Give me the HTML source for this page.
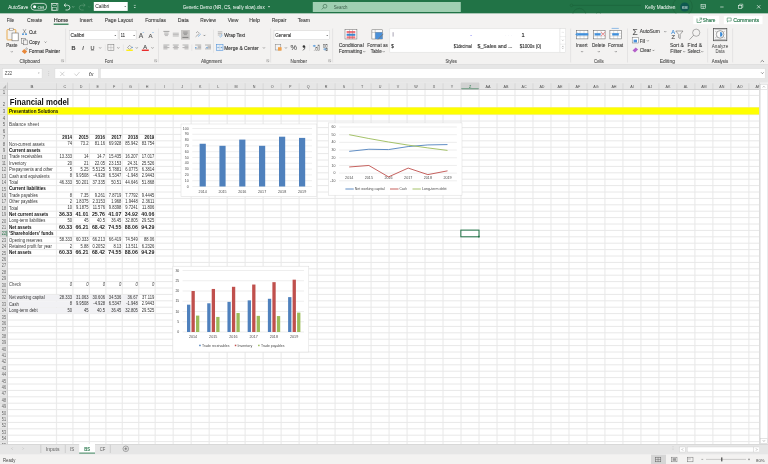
<!DOCTYPE html><html><head><meta charset="utf-8"><title>Generic Demo - Excel</title><style>
html,body{margin:0;padding:0;width:768px;height:464px;overflow:hidden;background:#fff;}
body{position:relative;font-family:"Liberation Sans",sans-serif;}
.sec{position:absolute;left:0;width:768px;overflow:hidden;will-change:transform;}
.sec svg{position:absolute;left:0;top:0;display:block;}
svg text{font-family:"Liberation Sans",sans-serif;}
</style></head><body>
<div class="sec" id="titlebar" style="top:0px;height:14px">
<svg width="768" height="14" viewBox="0 0 768 14">
<rect x="0" y="0" width="768" height="13.60" fill="#217346"/>
<path d="M572.8 5.4 H641" fill="none" stroke="#1b6239" stroke-width="0.6"/>
<circle cx="571.50" cy="5.40" r="1.30" fill="none" stroke="#1b6239" stroke-width="0.55"/>
<circle cx="579.30" cy="15.00" r="6.60" fill="none" stroke="#1b6239" stroke-width="0.6"/>
<circle cx="598.50" cy="14.50" r="2.30" fill="none" stroke="#1b6239" stroke-width="0.5"/>
<circle cx="682.50" cy="6.50" r="9.80" fill="none" stroke="#1b6239" stroke-width="0.6"/>
<text x="8.30" y="8.90" font-size="5.0" fill="#ffffff" textLength="20.00" lengthAdjust="spacingAndGlyphs">AutoSave</text>
<rect x="31.00" y="3.40" width="15.60" height="6.80" fill="none" stroke="#ffffff" stroke-width="0.7" rx="3.4"/>
<circle cx="34.60" cy="6.80" r="1.50" fill="#ffffff"/>
<text x="37.50" y="8.80" font-size="4.4" fill="#ffffff" textLength="6.50" lengthAdjust="spacingAndGlyphs">Off</text>
<rect x="51.30" y="3.40" width="6.60" height="6.80" fill="none" stroke="#e8f0ea" stroke-width="0.6"/>
<rect x="52.80" y="3.40" width="3.60" height="2.20" fill="none" stroke="#e8f0ea" stroke-width="0.5"/>
<rect x="52.60" y="7.60" width="4.00" height="2.60" fill="none" stroke="#e8f0ea" stroke-width="0.5"/>
<path d="M64.2 5.2 h3.3 a2.4 2.4 0 0 1 0 4.8 h-2" fill="none" stroke="#ffffff" stroke-width="0.7"/>
<path d="M65.8 3.6 l-1.8 1.6 l1.8 1.6" fill="none" stroke="#ffffff" stroke-width="0.7"/>
<path d="M72.3 6.4 l0.9 0.9 l0.9 -0.9" fill="none" stroke="#cfe3d6" stroke-width="0.5"/>
<path d="M85 5.2 h-3.3 a2.4 2.4 0 0 0 0 4.8 h2" fill="none" stroke="#5c9a76" stroke-width="0.7"/>
<path d="M83.4 3.6 l1.8 1.6 l-1.8 1.6" fill="none" stroke="#5c9a76" stroke-width="0.7"/>
<path d="M88.3 6.4 l0.9 0.9 l0.9 -0.9" fill="none" stroke="#5c9a76" stroke-width="0.5"/>
<rect x="93.80" y="2.00" width="33.90" height="8.90" fill="#ffffff"/>
<text x="95.20" y="8.40" font-size="4.9" fill="#222" textLength="14.20" lengthAdjust="spacingAndGlyphs">Calibri</text>
<path d="M124.3 6.0 h1.8 l-0.9 0.9z" fill="#444"/>
<line x1="133.80" y1="5.40" x2="135.80" y2="5.40" stroke="#ffffff" stroke-width="0.5"/>
<path d="M133.8 7.0 h2 l-1 1z" fill="#ffffff"/>
<text x="182.70" y="8.80" font-size="4.9" fill="#ffffff" textLength="82.00" lengthAdjust="spacingAndGlyphs">Generic Demo (NR, CS, really slow).xlsx</text>
<path d="M267.9 6.3 h2.2 l-1.1 1.1z" fill="#ffffff"/>
<rect x="312.80" y="2.00" width="148.00" height="10.00" fill="#a0cfb2"/>
<circle cx="325.00" cy="6.20" r="1.90" fill="none" stroke="#2f5f43" stroke-width="0.55"/>
<line x1="323.60" y1="7.60" x2="321.80" y2="9.40" stroke="#2f5f43" stroke-width="0.6"/>
<text x="333.70" y="8.70" font-size="4.9" fill="#3c5e4a" textLength="13.80" lengthAdjust="spacingAndGlyphs">Search</text>
<text x="645.00" y="8.90" font-size="5.0" fill="#ffffff" textLength="30.50" lengthAdjust="spacingAndGlyphs">Kelly Maddren</text>
<circle cx="684.70" cy="7.00" r="4.60" fill="#0e5950"/>
<text x="684.70" y="8.50" font-size="3.6" fill="#ffffff" text-anchor="middle">KM</text>
<rect x="701.00" y="4.60" width="4.50" height="4.00" fill="none" stroke="#ffffff" stroke-width="0.5"/>
<line x1="701.00" y1="6.20" x2="705.50" y2="6.20" stroke="#ffffff" stroke-width="0.5"/>
<line x1="703.20" y1="6.20" x2="703.20" y2="8.60" stroke="#ffffff" stroke-width="0.5"/>
<line x1="720.20" y1="7.00" x2="723.60" y2="7.00" stroke="#ffffff" stroke-width="0.6"/>
<rect x="738.60" y="5.30" width="3.20" height="3.20" fill="none" stroke="#ffffff" stroke-width="0.55"/>
<path d="M739.6 5.2 v-1 h3.2 v3.2 h-1" fill="none" stroke="#ffffff" stroke-width="0.5"/>
<line x1="757.00" y1="5.10" x2="760.40" y2="8.50" stroke="#ffffff" stroke-width="0.6"/>
<line x1="760.40" y1="5.10" x2="757.00" y2="8.50" stroke="#ffffff" stroke-width="0.6"/>
</svg></div>
<div class="sec" id="ribbon" style="top:13px;height:52px">
<svg width="768" height="52" viewBox="0 13 768 52">
<rect x="0" y="13.6" width="768" height="50.60" fill="#f3f2f1"/>
<text x="6.70" y="21.80" font-size="5.9" fill="#444444" textLength="7.50" lengthAdjust="spacingAndGlyphs" stroke="#444444" stroke-width="0.12">File</text>
<text x="27.00" y="21.80" font-size="5.9" fill="#444444" textLength="15.20" lengthAdjust="spacingAndGlyphs" stroke="#444444" stroke-width="0.12">Create</text>
<text x="53.70" y="21.80" font-size="5.9" fill="#262626" textLength="14.60" lengthAdjust="spacingAndGlyphs" stroke="#262626" stroke-width="0.12">Home</text>
<text x="79.50" y="21.80" font-size="5.9" fill="#444444" textLength="13.00" lengthAdjust="spacingAndGlyphs" stroke="#444444" stroke-width="0.12">Insert</text>
<text x="104.70" y="21.80" font-size="5.9" fill="#444444" textLength="28.30" lengthAdjust="spacingAndGlyphs" stroke="#444444" stroke-width="0.12">Page Layout</text>
<text x="145.20" y="21.80" font-size="5.9" fill="#444444" textLength="20.80" lengthAdjust="spacingAndGlyphs" stroke="#444444" stroke-width="0.12">Formulas</text>
<text x="177.70" y="21.80" font-size="5.9" fill="#444444" textLength="11.10" lengthAdjust="spacingAndGlyphs" stroke="#444444" stroke-width="0.12">Data</text>
<text x="200.20" y="21.80" font-size="5.9" fill="#444444" textLength="15.80" lengthAdjust="spacingAndGlyphs" stroke="#444444" stroke-width="0.12">Review</text>
<text x="227.70" y="21.80" font-size="5.9" fill="#444444" textLength="10.80" lengthAdjust="spacingAndGlyphs" stroke="#444444" stroke-width="0.12">View</text>
<text x="249.30" y="21.80" font-size="5.9" fill="#444444" textLength="10.70" lengthAdjust="spacingAndGlyphs" stroke="#444444" stroke-width="0.12">Help</text>
<text x="271.80" y="21.80" font-size="5.9" fill="#444444" textLength="14.50" lengthAdjust="spacingAndGlyphs" stroke="#444444" stroke-width="0.12">Repair</text>
<text x="297.70" y="21.80" font-size="5.9" fill="#444444" textLength="12.30" lengthAdjust="spacingAndGlyphs" stroke="#444444" stroke-width="0.12">Team</text>
<rect x="53.70" y="23.60" width="14.80" height="1.20" fill="#217346"/>
<rect x="693.30" y="15.80" width="25.90" height="8.40" fill="#ffffff"/>
<path d="M697 18.5 v4 h4 v-1.5 M698.8 20.8 l2.8 -2.6 M699.5 18.1 h2.2 v2.1" fill="none" stroke="#217346" stroke-width="0.55"/>
<text x="702.80" y="22.00" font-size="4.9" fill="#217346" textLength="12.60" lengthAdjust="spacingAndGlyphs" stroke="#217346" stroke-width="0.12">Share</text>
<rect x="723.80" y="15.80" width="38.70" height="8.40" fill="#ffffff"/>
<path d="M727.2 18.0 h4 v3 h-2.6 l-1.1 1 v-1 h-0.3z" fill="none" stroke="#217346" stroke-width="0.5"/>
<text x="733.20" y="22.00" font-size="4.9" fill="#217346" textLength="26.00" lengthAdjust="spacingAndGlyphs" stroke="#217346" stroke-width="0.12">Comments</text>
<line x1="65.60" y1="28.50" x2="65.60" y2="62.50" stroke="#d6d6d6" stroke-width="0.55"/>
<line x1="158.50" y1="28.50" x2="158.50" y2="62.50" stroke="#d6d6d6" stroke-width="0.55"/>
<line x1="270.60" y1="28.50" x2="270.60" y2="62.50" stroke="#d6d6d6" stroke-width="0.55"/>
<line x1="332.60" y1="28.50" x2="332.60" y2="62.50" stroke="#d6d6d6" stroke-width="0.55"/>
<line x1="570.60" y1="28.50" x2="570.60" y2="62.50" stroke="#d6d6d6" stroke-width="0.55"/>
<line x1="627.50" y1="28.50" x2="627.50" y2="62.50" stroke="#d6d6d6" stroke-width="0.55"/>
<line x1="707.60" y1="28.50" x2="707.60" y2="62.50" stroke="#d6d6d6" stroke-width="0.55"/>
<line x1="732.60" y1="28.50" x2="732.60" y2="62.50" stroke="#d6d6d6" stroke-width="0.55"/>
<text x="29.60" y="63.00" font-size="5.06" fill="#555" text-anchor="middle" textLength="20.40" lengthAdjust="spacingAndGlyphs" stroke="#555" stroke-width="0.12">Clipboard</text>
<text x="108.75" y="63.00" font-size="5.06" fill="#555" text-anchor="middle" textLength="8.00" lengthAdjust="spacingAndGlyphs" stroke="#555" stroke-width="0.12">Font</text>
<text x="211.40" y="63.00" font-size="5.06" fill="#555" text-anchor="middle" textLength="21.00" lengthAdjust="spacingAndGlyphs" stroke="#555" stroke-width="0.12">Alignment</text>
<text x="298.75" y="63.00" font-size="5.06" fill="#555" text-anchor="middle" textLength="16.50" lengthAdjust="spacingAndGlyphs" stroke="#555" stroke-width="0.12">Number</text>
<text x="451.20" y="63.00" font-size="5.06" fill="#555" text-anchor="middle" textLength="11.30" lengthAdjust="spacingAndGlyphs" stroke="#555" stroke-width="0.12">Styles</text>
<text x="598.80" y="63.00" font-size="5.06" fill="#555" text-anchor="middle" textLength="9.50" lengthAdjust="spacingAndGlyphs" stroke="#555" stroke-width="0.12">Cells</text>
<text x="667.40" y="63.00" font-size="5.06" fill="#555" text-anchor="middle" textLength="15.20" lengthAdjust="spacingAndGlyphs" stroke="#555" stroke-width="0.12">Editing</text>
<text x="720.00" y="63.00" font-size="5.06" fill="#555" text-anchor="middle" textLength="16.30" lengthAdjust="spacingAndGlyphs" stroke="#555" stroke-width="0.12">Analysis</text>
<path d="M61.4 59.6 h2.2 v2.2 h-2.2z" fill="none" stroke="#888" stroke-width="0.35"/>
<line x1="62.10" y1="60.30" x2="63.60" y2="61.80" stroke="#666" stroke-width="0.4"/>
<path d="M154.5 59.6 h2.2 v2.2 h-2.2z" fill="none" stroke="#888" stroke-width="0.35"/>
<line x1="155.20" y1="60.30" x2="156.70" y2="61.80" stroke="#666" stroke-width="0.4"/>
<path d="M266.65 59.6 h2.2 v2.2 h-2.2z" fill="none" stroke="#888" stroke-width="0.35"/>
<line x1="267.35" y1="60.30" x2="268.85" y2="61.80" stroke="#666" stroke-width="0.4"/>
<path d="M328.5 59.6 h2.2 v2.2 h-2.2z" fill="none" stroke="#888" stroke-width="0.35"/>
<line x1="329.20" y1="60.30" x2="330.70" y2="61.80" stroke="#666" stroke-width="0.4"/>
<path d="M760.6 62.0 l1.7 -1.6 l1.7 1.6" fill="none" stroke="#444" stroke-width="0.6"/>
<rect x="7.00" y="29.60" width="8.80" height="10.30" fill="none" stroke="#e8a33d" stroke-width="0.9" rx="0.6"/>
<rect x="9.60" y="28.20" width="3.60" height="2.00" fill="#ffffff" stroke="#777" stroke-width="0.5"/>
<rect x="12.00" y="33.00" width="6.20" height="7.80" fill="#ffffff" stroke="#666" stroke-width="0.6"/>
<text x="11.80" y="47.40" font-size="5.17" fill="#444" text-anchor="middle" textLength="11.30" lengthAdjust="spacingAndGlyphs" stroke="#444" stroke-width="0.12">Paste</text>
<path d="M11.0 51.4 l0.8 0.8 l0.8 -0.8" fill="none" stroke="#3a3a3a" stroke-width="0.55"/>
<path d="M23.1 29.2 l2.6 4.2 M25.9 29.2 l-2.6 4.2" fill="none" stroke="#555" stroke-width="0.5"/>
<circle cx="23.00" cy="34.20" r="0.90" fill="#3a8ad6"/>
<circle cx="26.00" cy="34.20" r="0.90" fill="#3a8ad6"/>
<text x="29.00" y="34.20" font-size="5.17" fill="#333" textLength="7.25" lengthAdjust="spacingAndGlyphs" stroke="#333" stroke-width="0.12">Cut</text>
<rect x="21.50" y="38.60" width="3.80" height="4.80" fill="#f3f2f1" stroke="#555" stroke-width="0.45"/>
<rect x="23.30" y="40.00" width="3.90" height="4.80" fill="#f3f2f1" stroke="#555" stroke-width="0.45"/>
<text x="29.00" y="43.60" font-size="5.17" fill="#333" textLength="10.70" lengthAdjust="spacingAndGlyphs" stroke="#333" stroke-width="0.12">Copy</text>
<path d="M44.6 41.6 l0.95 0.95 l0.95 -0.95" fill="none" stroke="#3a3a3a" stroke-width="0.5"/>
<path d="M21.8 51.5 l3.0 2.4 l2.4 -2.4 l-3 -2.4z" fill="#e8883a"/>
<path d="M25.2 49.2 l1.8 -1.6 M26.2 50.0 l1.8 -1.6" fill="none" stroke="#555" stroke-width="0.5"/>
<text x="29.00" y="53.00" font-size="5.17" fill="#333" textLength="31.00" lengthAdjust="spacingAndGlyphs" stroke="#333" stroke-width="0.12">Format Painter</text>
<rect x="69.30" y="30.60" width="48.70" height="9.00" fill="#ffffff" stroke="#c8c8c8" stroke-width="0.4"/>
<text x="70.60" y="37.30" font-size="5.39" fill="#333" textLength="13.80" lengthAdjust="spacingAndGlyphs" stroke="#333" stroke-width="0.12">Calibri</text>
<path d="M114.4 35.0 h1.8 l-0.9 0.9z" fill="#444"/>
<rect x="119.60" y="30.60" width="16.50" height="9.00" fill="#ffffff" stroke="#c8c8c8" stroke-width="0.4"/>
<text x="120.80" y="37.30" font-size="5.39" fill="#333" textLength="4.00" lengthAdjust="spacingAndGlyphs" stroke="#333" stroke-width="0.12">11</text>
<path d="M133.2 35.0 h1.8 l-0.9 0.9z" fill="#444"/>
<text x="138.80" y="37.80" font-size="6.82" fill="#555" textLength="4.40" lengthAdjust="spacingAndGlyphs" stroke="#555" stroke-width="0.12">A</text>
<path d="M142.6 32.9 l0.7 -0.7 l0.7 0.7" fill="none" stroke="#3a8ad6" stroke-width="0.45"/>
<text x="148.60" y="37.80" font-size="6.16" fill="#555" textLength="4.00" lengthAdjust="spacingAndGlyphs" stroke="#555" stroke-width="0.12">A</text>
<path d="M152.3 32.2 l0.7 0.7 l0.7 -0.7" fill="none" stroke="#3a8ad6" stroke-width="0.45"/>
<text x="73.40" y="49.60" font-size="5.5" fill="#444" text-anchor="middle" font-weight="bold" stroke="#444" stroke-width="0.12">B</text>
<text x="83.00" y="49.60" font-size="5.5" fill="#444" text-anchor="middle" font-style="italic" stroke="#444" stroke-width="0.12">I</text>
<text x="92.50" y="49.60" font-size="5.5" fill="#444" text-anchor="middle" stroke="#444" stroke-width="0.12">U</text>
<line x1="90.80" y1="50.30" x2="94.20" y2="50.30" stroke="#444" stroke-width="0.4"/>
<path d="M99.2 47.4 l0.95 0.95 l0.95 -0.95" fill="none" stroke="#3a3a3a" stroke-width="0.5"/>
<path d="M117.39999999999999 47.4 l0.95 0.95 l0.95 -0.95" fill="none" stroke="#3a3a3a" stroke-width="0.5"/>
<path d="M135.8 47.4 l0.95 0.95 l0.95 -0.95" fill="none" stroke="#3a3a3a" stroke-width="0.5"/>
<path d="M151.55 47.4 l0.95 0.95 l0.95 -0.95" fill="none" stroke="#3a3a3a" stroke-width="0.5"/>
<line x1="105.30" y1="44.50" x2="105.30" y2="51.00" stroke="#d6d6d6" stroke-width="0.4"/>
<line x1="123.40" y1="44.50" x2="123.40" y2="51.00" stroke="#d6d6d6" stroke-width="0.4"/>
<rect x="107.90" y="44.60" width="6.00" height="6.00" fill="none" stroke="#666" stroke-width="0.45"/>
<line x1="110.90" y1="44.60" x2="110.90" y2="50.60" stroke="#999" stroke-width="0.35"/>
<line x1="107.90" y1="47.60" x2="113.90" y2="47.60" stroke="#999" stroke-width="0.35"/>
<path d="M127.5 47.5 l2.2 -2.2 l2.2 2.2 l-2.2 2 z" fill="none" stroke="#555" stroke-width="0.45"/>
<circle cx="132.20" cy="47.30" r="0.60" fill="#3a8ad6"/>
<rect x="126.30" y="49.60" width="6.50" height="1.30" fill="#ffee00"/>
<text x="145.25" y="49.30" font-size="5.72" fill="#444" text-anchor="middle" stroke="#444" stroke-width="0.12">A</text>
<rect x="141.80" y="49.60" width="7.00" height="1.30" fill="#e81818"/>
<line x1="163.40" y1="31.40" x2="169.40" y2="31.40" stroke="#555" stroke-width="0.5"/>
<line x1="164.20" y1="33.00" x2="168.60" y2="33.00" stroke="#777" stroke-width="0.45"/>
<line x1="164.20" y1="34.30" x2="168.60" y2="34.30" stroke="#777" stroke-width="0.45"/>
<line x1="164.90" y1="35.60" x2="167.90" y2="35.60" stroke="#777" stroke-width="0.45"/>
<line x1="172.80" y1="33.20" x2="178.80" y2="33.20" stroke="#777" stroke-width="0.45"/>
<line x1="172.80" y1="34.60" x2="178.80" y2="34.60" stroke="#777" stroke-width="0.45"/>
<line x1="172.80" y1="36.00" x2="178.80" y2="36.00" stroke="#777" stroke-width="0.45"/>
<rect x="181.00" y="30.00" width="8.80" height="9.60" fill="#c8c6c4"/>
<line x1="183.20" y1="32.00" x2="187.60" y2="32.00" stroke="#666" stroke-width="0.45"/>
<line x1="183.20" y1="33.30" x2="187.60" y2="33.30" stroke="#666" stroke-width="0.45"/>
<line x1="183.90" y1="34.60" x2="186.90" y2="34.60" stroke="#666" stroke-width="0.45"/>
<line x1="182.40" y1="37.40" x2="188.40" y2="37.40" stroke="#444" stroke-width="0.55"/>
<path d="M195.6 36.8 l4 -3.6 M196 33 l1.6 -1.4 l1.2 1.2" fill="none" stroke="#666" stroke-width="0.5"/>
<path d="M198 36.6 l2.8 -2.6" fill="none" stroke="#3a8ad6" stroke-width="0.55"/>
<path d="M203.5 34.9 l0.95 0.95 l0.95 -0.95" fill="none" stroke="#3a3a3a" stroke-width="0.5"/>
<line x1="163.40" y1="45.00" x2="169.40" y2="45.00" stroke="#666" stroke-width="0.45"/>
<line x1="163.40" y1="46.30" x2="167.40" y2="46.30" stroke="#666" stroke-width="0.45"/>
<line x1="163.40" y1="47.60" x2="169.40" y2="47.60" stroke="#666" stroke-width="0.45"/>
<line x1="163.40" y1="48.90" x2="167.40" y2="48.90" stroke="#666" stroke-width="0.45"/>
<line x1="172.80" y1="45.00" x2="178.80" y2="45.00" stroke="#666" stroke-width="0.45"/>
<line x1="173.80" y1="46.30" x2="177.80" y2="46.30" stroke="#666" stroke-width="0.45"/>
<line x1="172.80" y1="47.60" x2="178.80" y2="47.60" stroke="#666" stroke-width="0.45"/>
<line x1="173.80" y1="48.90" x2="177.80" y2="48.90" stroke="#666" stroke-width="0.45"/>
<line x1="182.50" y1="45.00" x2="188.50" y2="45.00" stroke="#666" stroke-width="0.45"/>
<line x1="184.50" y1="46.30" x2="188.50" y2="46.30" stroke="#666" stroke-width="0.45"/>
<line x1="182.50" y1="47.60" x2="188.50" y2="47.60" stroke="#666" stroke-width="0.45"/>
<line x1="184.50" y1="48.90" x2="188.50" y2="48.90" stroke="#666" stroke-width="0.45"/>
<line x1="191.80" y1="44.50" x2="191.80" y2="51.00" stroke="#d6d6d6" stroke-width="0.4"/>
<line x1="195.20" y1="45.00" x2="201.20" y2="45.00" stroke="#666" stroke-width="0.45"/>
<line x1="197.70" y1="46.30" x2="201.20" y2="46.30" stroke="#666" stroke-width="0.45"/>
<line x1="197.70" y1="47.60" x2="201.20" y2="47.60" stroke="#666" stroke-width="0.45"/>
<line x1="195.20" y1="48.90" x2="201.20" y2="48.90" stroke="#666" stroke-width="0.45"/>
<path d="M195.2 47.0 l1.8 0.7 l-1.8 0.7z" fill="#3a8ad6"/>
<line x1="205.00" y1="45.00" x2="211.00" y2="45.00" stroke="#666" stroke-width="0.45"/>
<line x1="207.50" y1="46.30" x2="211.00" y2="46.30" stroke="#666" stroke-width="0.45"/>
<line x1="207.50" y1="47.60" x2="211.00" y2="47.60" stroke="#666" stroke-width="0.45"/>
<line x1="205.00" y1="48.90" x2="211.00" y2="48.90" stroke="#666" stroke-width="0.45"/>
<path d="M207.5 47.0 l-1.8 0.7 l1.8 0.7z" fill="#3a8ad6"/>
<line x1="213.50" y1="29.60" x2="213.50" y2="52.80" stroke="#d6d6d6" stroke-width="0.45"/>
<line x1="217.80" y1="31.80" x2="222.30" y2="31.80" stroke="#777" stroke-width="0.45"/>
<line x1="217.80" y1="33.40" x2="222.30" y2="33.40" stroke="#777" stroke-width="0.45"/>
<line x1="217.80" y1="35.00" x2="220.80" y2="35.00" stroke="#777" stroke-width="0.45"/>
<path d="M219.5 36.6 a1.5 1.5 0 0 0 1.8 -2.6" fill="none" stroke="#3a8ad6" stroke-width="0.5"/>
<text x="224.25" y="37.40" font-size="5.17" fill="#333" textLength="20.90" lengthAdjust="spacingAndGlyphs" stroke="#333" stroke-width="0.12">Wrap Text</text>
<rect x="216.60" y="44.40" width="6.40" height="6.20" fill="#e4eef8" stroke="#4a90d9" stroke-width="0.55"/>
<line x1="219.80" y1="44.40" x2="219.80" y2="50.60" stroke="#9ab" stroke-width="0.3"/>
<line x1="216.60" y1="47.50" x2="223.00" y2="47.50" stroke="#9ab" stroke-width="0.3"/>
<path d="M217.4 47.5 l1 -0.8 v1.6z M222.2 47.5 l-1 -0.8 v1.6z" fill="#3a8ad6"/>
<text x="224.25" y="49.60" font-size="5.17" fill="#333" textLength="34.50" lengthAdjust="spacingAndGlyphs" stroke="#333" stroke-width="0.12">Merge &amp; Center</text>
<path d="M263.0 47.4 l0.95 0.95 l0.95 -0.95" fill="none" stroke="#3a3a3a" stroke-width="0.5"/>
<rect x="274.00" y="30.60" width="55.60" height="9.00" fill="#ffffff" stroke="#c8c8c8" stroke-width="0.4"/>
<text x="275.30" y="37.30" font-size="5.39" fill="#333" textLength="16.00" lengthAdjust="spacingAndGlyphs" stroke="#333" stroke-width="0.12">General</text>
<path d="M326.3 35.0 h1.8 l-0.9 0.9z" fill="#444"/>
<rect x="275.20" y="44.60" width="5.60" height="5.40" fill="none" stroke="#777" stroke-width="0.45"/>
<rect x="278.00" y="47.20" width="3.60" height="3.40" fill="#f0a04a"/>
<path d="M285.0 47.4 l0.95 0.95 l0.95 -0.95" fill="none" stroke="#3a3a3a" stroke-width="0.5"/>
<text x="293.75" y="50.00" font-size="7.26" fill="#555" text-anchor="middle" stroke="#555" stroke-width="0.12">%</text>
<circle cx="303.90" cy="46.60" r="1.25" fill="#333"/>
<path d="M304.9 46.8 q0.2 2.2 -1.9 3.6" fill="none" stroke="#333" stroke-width="0.8"/>
<line x1="309.60" y1="44.50" x2="309.60" y2="51.00" stroke="#d6d6d6" stroke-width="0.4"/>
<path d="M312.6 45.9 l2.0 -1.2 v2.4z" fill="#3a8ad6"/>
<line x1="314.40" y1="45.90" x2="316.00" y2="45.90" stroke="#3a8ad6" stroke-width="0.6"/>
<rect x="315.80" y="47.20" width="1.30" height="3.40" fill="none" stroke="#666" stroke-width="0.45"/>
<rect x="318.00" y="45.00" width="1.30" height="5.60" fill="none" stroke="#666" stroke-width="0.45"/>
<circle cx="314.20" cy="50.20" r="0.35" fill="#555"/>
<path d="M323.2 49.2 h2.2 M324.8 48.2 l1.8 1.0 l-1.8 1.0z" fill="none" stroke="#3a8ad6" stroke-width="0.5"/>
<rect x="323.60" y="44.60" width="1.30" height="2.80" fill="none" stroke="#666" stroke-width="0.45"/>
<rect x="325.80" y="44.60" width="1.30" height="2.80" fill="none" stroke="#666" stroke-width="0.45"/>
<rect x="326.00" y="48.20" width="1.30" height="2.60" fill="none" stroke="#666" stroke-width="0.45"/>
<rect x="345.00" y="29.60" width="11.90" height="9.40" fill="#ffffff" stroke="#666" stroke-width="0.5"/>
<rect x="346.60" y="31.00" width="8.70" height="2.30" fill="#f2747c"/>
<rect x="346.60" y="33.80" width="8.70" height="2.00" fill="#3a8ad6"/>
<rect x="346.60" y="36.30" width="8.70" height="2.20" fill="#f2747c"/>
<line x1="349.50" y1="29.60" x2="349.50" y2="39.00" stroke="#777" stroke-width="0.35"/>
<line x1="352.50" y1="29.60" x2="352.50" y2="39.00" stroke="#777" stroke-width="0.35"/>
<text x="351.25" y="47.00" font-size="5.17" fill="#444" text-anchor="middle" textLength="25.00" lengthAdjust="spacingAndGlyphs" stroke="#444" stroke-width="0.12">Conditional</text>
<text x="350.50" y="53.00" font-size="5.17" fill="#444" text-anchor="middle" textLength="23.50" lengthAdjust="spacingAndGlyphs" stroke="#444" stroke-width="0.12">Formatting</text>
<path d="M363.3 51.2 l0.95 0.95 l0.95 -0.95" fill="none" stroke="#3a3a3a" stroke-width="0.5"/>
<rect x="371.90" y="29.80" width="10.50" height="9.20" fill="#ffffff" stroke="#666" stroke-width="0.5"/>
<rect x="375.20" y="32.20" width="7.20" height="6.80" fill="#4a90d9"/>
<line x1="371.90" y1="32.40" x2="382.40" y2="32.40" stroke="#777" stroke-width="0.35"/>
<line x1="375.20" y1="29.80" x2="375.20" y2="39.00" stroke="#777" stroke-width="0.35"/>
<path d="M378 39.5 l5.2 -5.6" fill="none" stroke="#777" stroke-width="0.9"/>
<text x="377.50" y="47.00" font-size="5.17" fill="#444" text-anchor="middle" textLength="20.50" lengthAdjust="spacingAndGlyphs" stroke="#444" stroke-width="0.12">Format as</text>
<text x="376.20" y="53.00" font-size="5.17" fill="#444" text-anchor="middle" textLength="11.00" lengthAdjust="spacingAndGlyphs" stroke="#444" stroke-width="0.12">Table</text>
<path d="M382.7 51.2 l0.95 0.95 l0.95 -0.95" fill="none" stroke="#3a3a3a" stroke-width="0.5"/>
<rect x="389.80" y="28.80" width="170.20" height="23.40" fill="#ffffff" stroke="#dedede" stroke-width="0.5"/>
<rect x="560.00" y="28.80" width="5.60" height="23.40" fill="#ffffff" stroke="#d0d0d0" stroke-width="0.35"/>
<line x1="560.00" y1="36.60" x2="565.60" y2="36.60" stroke="#d0d0d0" stroke-width="0.35"/>
<line x1="560.00" y1="44.20" x2="565.60" y2="44.20" stroke="#d0d0d0" stroke-width="0.35"/>
<path d="M562.1 32.6 l0.7 -0.7 l0.7 0.7" fill="none" stroke="#999" stroke-width="0.35"/>
<path d="M562.1 39.8 l0.7 0.7 l0.7 -0.7" fill="none" stroke="#555" stroke-width="0.4"/>
<line x1="562.00" y1="46.40" x2="563.60" y2="46.40" stroke="#555" stroke-width="0.35"/>
<path d="M562.1 47.8 l0.7 0.7 l0.7 -0.7" fill="none" stroke="#555" stroke-width="0.4"/>
<rect x="392.60" y="32.20" width="1.00" height="4.40" fill="#a9a4b4"/>
<text x="391.20" y="48.20" font-size="5.5" fill="#222" textLength="2.60" lengthAdjust="spacingAndGlyphs" stroke="#222" stroke-width="0.12">$</text>
<line x1="470.40" y1="35.50" x2="471.80" y2="35.50" stroke="#5a5af0" stroke-width="0.5"/>
<circle cx="505.50" cy="35.50" r="0.30" fill="#d9d9ee"/>
<circle cx="508.50" cy="35.50" r="0.30" fill="#d9d9ee"/>
<circle cx="511.50" cy="35.50" r="0.30" fill="#d9d9ee"/>
<text x="523.10" y="37.20" font-size="5.72" fill="#222" text-anchor="middle" stroke="#222" stroke-width="0.12">1</text>
<text x="453.75" y="48.20" font-size="4.73" fill="#333" textLength="18.10" lengthAdjust="spacingAndGlyphs" stroke="#333" stroke-width="0.12">$1decimal</text>
<text x="477.50" y="48.30" font-size="5.39" fill="#333" textLength="35.00" lengthAdjust="spacingAndGlyphs" stroke="#333" stroke-width="0.12">$_Sales and ...</text>
<text x="519.75" y="48.30" font-size="4.95" fill="#333" textLength="21.50" lengthAdjust="spacingAndGlyphs" stroke="#333" stroke-width="0.12">$1000s (0)</text>
<rect x="576.30" y="30.50" width="11.60" height="8.40" fill="#ffffff" stroke="#5a5a5a" stroke-width="0.5"/>
<line x1="576.30" y1="33.30" x2="587.90" y2="33.30" stroke="#9a9a9a" stroke-width="0.3"/>
<line x1="576.30" y1="36.10" x2="587.90" y2="36.10" stroke="#9a9a9a" stroke-width="0.3"/>
<line x1="580.10" y1="30.50" x2="580.10" y2="38.90" stroke="#9a9a9a" stroke-width="0.3"/>
<line x1="584.00" y1="30.50" x2="584.00" y2="38.90" stroke="#9a9a9a" stroke-width="0.3"/>
<rect x="577.50" y="33.20" width="10.80" height="2.30" fill="#3f8fdc"/>
<path d="M575.2 34.35 l2.4 -1.9 v3.8z" fill="#3f8fdc"/>
<rect x="593.50" y="30.50" width="11.60" height="8.40" fill="#ffffff" stroke="#5a5a5a" stroke-width="0.5"/>
<line x1="593.50" y1="33.30" x2="605.10" y2="33.30" stroke="#9a9a9a" stroke-width="0.3"/>
<line x1="593.50" y1="36.10" x2="605.10" y2="36.10" stroke="#9a9a9a" stroke-width="0.3"/>
<line x1="597.30" y1="30.50" x2="597.30" y2="38.90" stroke="#9a9a9a" stroke-width="0.3"/>
<line x1="601.20" y1="30.50" x2="601.20" y2="38.90" stroke="#9a9a9a" stroke-width="0.3"/>
<rect x="594.60" y="33.20" width="6.00" height="2.30" fill="#3f8fdc"/>
<path d="M600.9 31.8 l4.2 4.4 M605.1 31.8 l-4.2 4.4" fill="none" stroke="#e8505a" stroke-width="0.55"/>
<rect x="609.90" y="30.50" width="11.60" height="8.40" fill="#ffffff" stroke="#5a5a5a" stroke-width="0.5"/>
<line x1="609.90" y1="33.30" x2="621.50" y2="33.30" stroke="#9a9a9a" stroke-width="0.3"/>
<line x1="609.90" y1="36.10" x2="621.50" y2="36.10" stroke="#9a9a9a" stroke-width="0.3"/>
<line x1="613.70" y1="30.50" x2="613.70" y2="38.90" stroke="#9a9a9a" stroke-width="0.3"/>
<line x1="617.60" y1="30.50" x2="617.60" y2="38.90" stroke="#9a9a9a" stroke-width="0.3"/>
<rect x="612.20" y="33.20" width="6.60" height="2.30" fill="#3f8fdc"/>
<line x1="611.60" y1="28.40" x2="618.80" y2="28.40" stroke="#3f8fdc" stroke-width="0.55"/>
<text x="581.75" y="47.00" font-size="5.17" fill="#444" text-anchor="middle" textLength="11.50" lengthAdjust="spacingAndGlyphs" stroke="#444" stroke-width="0.12">Insert</text>
<path d="M581.1 51.2 l0.95 0.95 l0.95 -0.95" fill="none" stroke="#3a3a3a" stroke-width="0.5"/>
<text x="598.60" y="47.00" font-size="5.17" fill="#444" text-anchor="middle" textLength="13.40" lengthAdjust="spacingAndGlyphs" stroke="#444" stroke-width="0.12">Delete</text>
<path d="M597.9 51.2 l0.95 0.95 l0.95 -0.95" fill="none" stroke="#3a3a3a" stroke-width="0.5"/>
<text x="615.60" y="47.00" font-size="5.17" fill="#444" text-anchor="middle" textLength="15.10" lengthAdjust="spacingAndGlyphs" stroke="#444" stroke-width="0.12">Format</text>
<path d="M614.9 51.2 l0.95 0.95 l0.95 -0.95" fill="none" stroke="#3a3a3a" stroke-width="0.5"/>
<text x="635.00" y="35.00" font-size="8.36" fill="#555" text-anchor="middle" stroke="#555" stroke-width="0.12">Σ</text>
<text x="639.75" y="33.20" font-size="5.17" fill="#444" textLength="20.00" lengthAdjust="spacingAndGlyphs" stroke="#444" stroke-width="0.12">AutoSum</text>
<path d="M664.3 31.2 l0.95 0.95 l0.95 -0.95" fill="none" stroke="#3a3a3a" stroke-width="0.5"/>
<rect x="632.20" y="37.40" width="6.20" height="5.60" fill="#ffffff" stroke="#666" stroke-width="0.45"/>
<rect x="633.60" y="39.60" width="3.40" height="2.80" fill="#4a90d9"/>
<text x="639.75" y="42.70" font-size="5.17" fill="#444" textLength="5.60" lengthAdjust="spacingAndGlyphs" stroke="#444" stroke-width="0.12">Fill</text>
<path d="M646.9 40.3 l0.95 0.95 l0.95 -0.95" fill="none" stroke="#3a3a3a" stroke-width="0.5"/>
<path d="M632.5 50.4 l3.2 -3.0 l2.4 2.2 l-3.2 3.0z" fill="#b35fc9"/>
<text x="639.75" y="52.30" font-size="5.17" fill="#444" textLength="11.20" lengthAdjust="spacingAndGlyphs" stroke="#444" stroke-width="0.12">Clear</text>
<path d="M652.5 49.9 l0.95 0.95 l0.95 -0.95" fill="none" stroke="#3a3a3a" stroke-width="0.5"/>
<text x="673.20" y="33.60" font-size="5.72" fill="#3a8ad6" text-anchor="middle" stroke="#3a8ad6" stroke-width="0.12">A</text>
<text x="673.20" y="39.30" font-size="5.72" fill="#555" text-anchor="middle" stroke="#555" stroke-width="0.12">Z</text>
<path d="M675.8 31.0 h7.2 l-2.8 3.4 v4.2 l-1.6 -1.0 v-3.2z" fill="none" stroke="#555" stroke-width="0.5"/>
<text x="676.90" y="47.00" font-size="5.17" fill="#444" text-anchor="middle" textLength="13.70" lengthAdjust="spacingAndGlyphs" stroke="#444" stroke-width="0.12">Sort &amp;</text>
<text x="676.00" y="53.00" font-size="5.17" fill="#444" text-anchor="middle" textLength="11.50" lengthAdjust="spacingAndGlyphs" stroke="#444" stroke-width="0.12">Filter</text>
<path d="M683.2 51.2 l0.95 0.95 l0.95 -0.95" fill="none" stroke="#3a3a3a" stroke-width="0.5"/>
<circle cx="696.20" cy="32.70" r="3.60" fill="none" stroke="#666" stroke-width="0.5"/>
<line x1="693.60" y1="35.30" x2="689.60" y2="39.60" stroke="#666" stroke-width="0.55"/>
<text x="694.80" y="47.00" font-size="5.17" fill="#444" text-anchor="middle" textLength="14.40" lengthAdjust="spacingAndGlyphs" stroke="#444" stroke-width="0.12">Find &amp;</text>
<text x="693.80" y="53.00" font-size="5.17" fill="#444" text-anchor="middle" textLength="12.80" lengthAdjust="spacingAndGlyphs" stroke="#444" stroke-width="0.12">Select</text>
<path d="M701.3 51.2 l0.95 0.95 l0.95 -0.95" fill="none" stroke="#3a3a3a" stroke-width="0.5"/>
<rect x="713.50" y="28.40" width="13.30" height="12.30" fill="#f8f8f8" stroke="#505050" stroke-width="0.75"/>
<circle cx="720.10" cy="34.40" r="3.80" fill="none" stroke="#666" stroke-width="0.6"/>
<path d="M720.1 32.0 a2.4 2.4 0 0 1 0 4.8z" fill="#3a8ad6"/>
<path d="M715 31 l2 1.5 M725 31 l-2 1.5 M715 38 l2 -1.5 M725 38 l-2 -1.5" fill="none" stroke="#888" stroke-width="0.4"/>
<line x1="714.50" y1="39.40" x2="725.80" y2="39.40" stroke="#777" stroke-width="0.5"/>
<line x1="714.50" y1="29.20" x2="725.80" y2="29.20" stroke="#777" stroke-width="0.5"/>
<text x="720.00" y="47.50" font-size="4.7" fill="#444" text-anchor="middle" textLength="16.50" lengthAdjust="spacingAndGlyphs">Analyze</text>
<text x="720.00" y="53.40" font-size="4.7" fill="#444" text-anchor="middle" textLength="9.00" lengthAdjust="spacingAndGlyphs">Data</text>
</svg></div>
<div class="sec" id="formula" style="top:64px;height:19px">
<svg width="768" height="19" viewBox="0 64 768 19">
<rect x="0" y="64.2" width="768" height="18.30" fill="#e6e6e6"/>
<line x1="0.00" y1="64.50" x2="768.00" y2="64.50" stroke="#d8d8d8" stroke-width="0.6"/>
<rect x="2.50" y="68.70" width="39.50" height="9.60" fill="#ffffff" stroke="#d4d4d4" stroke-width="0.3"/>
<text x="4.70" y="75.40" font-size="5.2" fill="#555" textLength="7.60" lengthAdjust="spacingAndGlyphs">Z22</text>
<path d="M38.0 72.8 h1.6 l-0.8 0.8z" fill="#555"/>
<circle cx="48.80" cy="71.50" r="0.35" fill="#9a9a9a"/>
<circle cx="48.80" cy="73.30" r="0.35" fill="#9a9a9a"/>
<circle cx="48.80" cy="75.10" r="0.35" fill="#9a9a9a"/>
<rect x="55.00" y="68.70" width="43.30" height="9.60" fill="#ffffff" stroke="#d4d4d4" stroke-width="0.3"/>
<path d="M60.2 71.8 l4.2 4.2 M64.4 71.8 l-4.2 4.2" fill="none" stroke="#a8a8a8" stroke-width="0.5"/>
<path d="M74.4 73.6 l2.0 2.2 l3.2 -3.8" fill="none" stroke="#a8a8a8" stroke-width="0.5"/>
<text x="91.20" y="75.80" font-size="6.0" fill="#444" text-anchor="middle" font-style="italic" font-family="'Liberation Serif', serif" textLength="4.80" lengthAdjust="spacingAndGlyphs">fx</text>
<rect x="100.50" y="68.70" width="664.60" height="9.60" fill="#ffffff" stroke="#d4d4d4" stroke-width="0.3"/>
<path d="M761.2 72.4 l1.2 1.2 l1.2 -1.2" fill="none" stroke="#444" stroke-width="0.6"/>
</svg></div>
<div class="sec" id="sheet" style="top:82px;height:362px">
<svg width="768" height="362" viewBox="0 82 768 362">
<rect x="0" y="82.5" width="768" height="361.50" fill="#e6e6e6"/>
<rect x="7.50" y="89.50" width="752.00" height="354.50" fill="#ffffff"/>
<rect x="0.00" y="82.50" width="759.50" height="7.00" fill="#e6e6e6"/>
<rect x="0.00" y="89.50" width="7.50" height="354.50" fill="#e6e6e6"/>
<rect x="461.03" y="82.50" width="17.99" height="7.00" fill="#d2d2d2"/>
<line x1="461.03" y1="89.00" x2="479.02" y2="89.00" stroke="#217346" stroke-width="0.9"/>
<rect x="0.00" y="230.40" width="7.50" height="6.40" fill="#d2d2d2"/>
<line x1="7.00" y1="230.40" x2="7.00" y2="236.80" stroke="#217346" stroke-width="0.9"/>
<line x1="56.50" y1="89.50" x2="56.50" y2="444.00" stroke="#ececec" stroke-width="1.2"/>
<line x1="72.95" y1="89.50" x2="72.95" y2="444.00" stroke="#ececec" stroke-width="1.2"/>
<line x1="89.40" y1="89.50" x2="89.40" y2="444.00" stroke="#ececec" stroke-width="1.2"/>
<line x1="105.85" y1="89.50" x2="105.85" y2="444.00" stroke="#ececec" stroke-width="1.2"/>
<line x1="122.30" y1="89.50" x2="122.30" y2="444.00" stroke="#ececec" stroke-width="1.2"/>
<line x1="138.75" y1="89.50" x2="138.75" y2="444.00" stroke="#ececec" stroke-width="1.2"/>
<line x1="155.20" y1="89.50" x2="155.20" y2="444.00" stroke="#ececec" stroke-width="1.2"/>
<line x1="173.19" y1="89.50" x2="173.19" y2="444.00" stroke="#ececec" stroke-width="1.2"/>
<line x1="191.18" y1="89.50" x2="191.18" y2="444.00" stroke="#ececec" stroke-width="1.2"/>
<line x1="209.17" y1="89.50" x2="209.17" y2="444.00" stroke="#ececec" stroke-width="1.2"/>
<line x1="227.16" y1="89.50" x2="227.16" y2="444.00" stroke="#ececec" stroke-width="1.2"/>
<line x1="245.15" y1="89.50" x2="245.15" y2="444.00" stroke="#ececec" stroke-width="1.2"/>
<line x1="263.14" y1="89.50" x2="263.14" y2="444.00" stroke="#ececec" stroke-width="1.2"/>
<line x1="281.13" y1="89.50" x2="281.13" y2="444.00" stroke="#ececec" stroke-width="1.2"/>
<line x1="299.12" y1="89.50" x2="299.12" y2="444.00" stroke="#ececec" stroke-width="1.2"/>
<line x1="317.11" y1="89.50" x2="317.11" y2="444.00" stroke="#ececec" stroke-width="1.2"/>
<line x1="335.10" y1="89.50" x2="335.10" y2="444.00" stroke="#ececec" stroke-width="1.2"/>
<line x1="353.09" y1="89.50" x2="353.09" y2="444.00" stroke="#ececec" stroke-width="1.2"/>
<line x1="371.08" y1="89.50" x2="371.08" y2="444.00" stroke="#ececec" stroke-width="1.2"/>
<line x1="389.07" y1="89.50" x2="389.07" y2="444.00" stroke="#ececec" stroke-width="1.2"/>
<line x1="407.06" y1="89.50" x2="407.06" y2="444.00" stroke="#ececec" stroke-width="1.2"/>
<line x1="425.05" y1="89.50" x2="425.05" y2="444.00" stroke="#ececec" stroke-width="1.2"/>
<line x1="443.04" y1="89.50" x2="443.04" y2="444.00" stroke="#ececec" stroke-width="1.2"/>
<line x1="461.03" y1="89.50" x2="461.03" y2="444.00" stroke="#ececec" stroke-width="1.2"/>
<line x1="479.02" y1="89.50" x2="479.02" y2="444.00" stroke="#ececec" stroke-width="1.2"/>
<line x1="497.01" y1="89.50" x2="497.01" y2="444.00" stroke="#ececec" stroke-width="1.2"/>
<line x1="515.00" y1="89.50" x2="515.00" y2="444.00" stroke="#ececec" stroke-width="1.2"/>
<line x1="532.99" y1="89.50" x2="532.99" y2="444.00" stroke="#ececec" stroke-width="1.2"/>
<line x1="550.98" y1="89.50" x2="550.98" y2="444.00" stroke="#ececec" stroke-width="1.2"/>
<line x1="568.97" y1="89.50" x2="568.97" y2="444.00" stroke="#ececec" stroke-width="1.2"/>
<line x1="586.96" y1="89.50" x2="586.96" y2="444.00" stroke="#ececec" stroke-width="1.2"/>
<line x1="604.95" y1="89.50" x2="604.95" y2="444.00" stroke="#ececec" stroke-width="1.2"/>
<line x1="622.94" y1="89.50" x2="622.94" y2="444.00" stroke="#ececec" stroke-width="1.2"/>
<line x1="640.93" y1="89.50" x2="640.93" y2="444.00" stroke="#ececec" stroke-width="1.2"/>
<line x1="658.92" y1="89.50" x2="658.92" y2="444.00" stroke="#ececec" stroke-width="1.2"/>
<line x1="676.91" y1="89.50" x2="676.91" y2="444.00" stroke="#ececec" stroke-width="1.2"/>
<line x1="694.90" y1="89.50" x2="694.90" y2="444.00" stroke="#ececec" stroke-width="1.2"/>
<line x1="712.89" y1="89.50" x2="712.89" y2="444.00" stroke="#ececec" stroke-width="1.2"/>
<line x1="730.88" y1="89.50" x2="730.88" y2="444.00" stroke="#ececec" stroke-width="1.2"/>
<line x1="748.87" y1="89.50" x2="748.87" y2="444.00" stroke="#ececec" stroke-width="1.2"/>
<line x1="7.50" y1="95.40" x2="759.50" y2="95.40" stroke="#e8e8e8" stroke-width="1.0"/>
<line x1="7.50" y1="107.60" x2="759.50" y2="107.60" stroke="#e8e8e8" stroke-width="1.0"/>
<line x1="7.50" y1="114.60" x2="759.50" y2="114.60" stroke="#e8e8e8" stroke-width="1.0"/>
<line x1="7.50" y1="121.00" x2="759.50" y2="121.00" stroke="#e8e8e8" stroke-width="1.0"/>
<line x1="7.50" y1="127.60" x2="759.50" y2="127.60" stroke="#e8e8e8" stroke-width="1.0"/>
<line x1="7.50" y1="134.40" x2="759.50" y2="134.40" stroke="#e8e8e8" stroke-width="1.0"/>
<line x1="7.50" y1="140.80" x2="759.50" y2="140.80" stroke="#e8e8e8" stroke-width="1.0"/>
<line x1="7.50" y1="147.20" x2="759.50" y2="147.20" stroke="#e8e8e8" stroke-width="1.0"/>
<line x1="7.50" y1="153.60" x2="759.50" y2="153.60" stroke="#e8e8e8" stroke-width="1.0"/>
<line x1="7.50" y1="160.00" x2="759.50" y2="160.00" stroke="#e8e8e8" stroke-width="1.0"/>
<line x1="7.50" y1="166.40" x2="759.50" y2="166.40" stroke="#e8e8e8" stroke-width="1.0"/>
<line x1="7.50" y1="172.80" x2="759.50" y2="172.80" stroke="#e8e8e8" stroke-width="1.0"/>
<line x1="7.50" y1="179.20" x2="759.50" y2="179.20" stroke="#e8e8e8" stroke-width="1.0"/>
<line x1="7.50" y1="185.60" x2="759.50" y2="185.60" stroke="#e8e8e8" stroke-width="1.0"/>
<line x1="7.50" y1="192.00" x2="759.50" y2="192.00" stroke="#e8e8e8" stroke-width="1.0"/>
<line x1="7.50" y1="198.40" x2="759.50" y2="198.40" stroke="#e8e8e8" stroke-width="1.0"/>
<line x1="7.50" y1="204.80" x2="759.50" y2="204.80" stroke="#e8e8e8" stroke-width="1.0"/>
<line x1="7.50" y1="211.20" x2="759.50" y2="211.20" stroke="#e8e8e8" stroke-width="1.0"/>
<line x1="7.50" y1="217.60" x2="759.50" y2="217.60" stroke="#e8e8e8" stroke-width="1.0"/>
<line x1="7.50" y1="224.00" x2="759.50" y2="224.00" stroke="#e8e8e8" stroke-width="1.0"/>
<line x1="7.50" y1="230.40" x2="759.50" y2="230.40" stroke="#e8e8e8" stroke-width="1.0"/>
<line x1="7.50" y1="236.80" x2="759.50" y2="236.80" stroke="#e8e8e8" stroke-width="1.0"/>
<line x1="7.50" y1="243.20" x2="759.50" y2="243.20" stroke="#e8e8e8" stroke-width="1.0"/>
<line x1="7.50" y1="249.60" x2="759.50" y2="249.60" stroke="#e8e8e8" stroke-width="1.0"/>
<line x1="7.50" y1="256.00" x2="759.50" y2="256.00" stroke="#e8e8e8" stroke-width="1.0"/>
<line x1="7.50" y1="262.40" x2="759.50" y2="262.40" stroke="#e8e8e8" stroke-width="1.0"/>
<line x1="7.50" y1="268.80" x2="759.50" y2="268.80" stroke="#e8e8e8" stroke-width="1.0"/>
<line x1="7.50" y1="275.20" x2="759.50" y2="275.20" stroke="#e8e8e8" stroke-width="1.0"/>
<line x1="7.50" y1="281.60" x2="759.50" y2="281.60" stroke="#e8e8e8" stroke-width="1.0"/>
<line x1="7.50" y1="288.00" x2="759.50" y2="288.00" stroke="#e8e8e8" stroke-width="1.0"/>
<line x1="7.50" y1="294.40" x2="759.50" y2="294.40" stroke="#e8e8e8" stroke-width="1.0"/>
<line x1="7.50" y1="300.80" x2="759.50" y2="300.80" stroke="#e8e8e8" stroke-width="1.0"/>
<line x1="7.50" y1="307.20" x2="759.50" y2="307.20" stroke="#e8e8e8" stroke-width="1.0"/>
<line x1="7.50" y1="313.60" x2="759.50" y2="313.60" stroke="#e8e8e8" stroke-width="1.0"/>
<line x1="7.50" y1="320.00" x2="759.50" y2="320.00" stroke="#e8e8e8" stroke-width="1.0"/>
<line x1="7.50" y1="326.40" x2="759.50" y2="326.40" stroke="#e8e8e8" stroke-width="1.0"/>
<line x1="7.50" y1="332.80" x2="759.50" y2="332.80" stroke="#e8e8e8" stroke-width="1.0"/>
<line x1="7.50" y1="339.20" x2="759.50" y2="339.20" stroke="#e8e8e8" stroke-width="1.0"/>
<line x1="7.50" y1="345.60" x2="759.50" y2="345.60" stroke="#e8e8e8" stroke-width="1.0"/>
<line x1="7.50" y1="352.00" x2="759.50" y2="352.00" stroke="#e8e8e8" stroke-width="1.0"/>
<line x1="7.50" y1="358.40" x2="759.50" y2="358.40" stroke="#e8e8e8" stroke-width="1.0"/>
<line x1="7.50" y1="364.80" x2="759.50" y2="364.80" stroke="#e8e8e8" stroke-width="1.0"/>
<line x1="7.50" y1="371.20" x2="759.50" y2="371.20" stroke="#e8e8e8" stroke-width="1.0"/>
<line x1="7.50" y1="377.60" x2="759.50" y2="377.60" stroke="#e8e8e8" stroke-width="1.0"/>
<line x1="7.50" y1="384.00" x2="759.50" y2="384.00" stroke="#e8e8e8" stroke-width="1.0"/>
<line x1="7.50" y1="390.40" x2="759.50" y2="390.40" stroke="#e8e8e8" stroke-width="1.0"/>
<line x1="7.50" y1="396.80" x2="759.50" y2="396.80" stroke="#e8e8e8" stroke-width="1.0"/>
<line x1="7.50" y1="403.20" x2="759.50" y2="403.20" stroke="#e8e8e8" stroke-width="1.0"/>
<line x1="7.50" y1="409.60" x2="759.50" y2="409.60" stroke="#e8e8e8" stroke-width="1.0"/>
<line x1="7.50" y1="416.00" x2="759.50" y2="416.00" stroke="#e8e8e8" stroke-width="1.0"/>
<line x1="7.50" y1="422.40" x2="759.50" y2="422.40" stroke="#e8e8e8" stroke-width="1.0"/>
<line x1="7.50" y1="428.80" x2="759.50" y2="428.80" stroke="#e8e8e8" stroke-width="1.0"/>
<line x1="7.50" y1="435.20" x2="759.50" y2="435.20" stroke="#e8e8e8" stroke-width="1.0"/>
<line x1="7.50" y1="441.60" x2="759.50" y2="441.60" stroke="#e8e8e8" stroke-width="1.0"/>
<line x1="56.50" y1="83.30" x2="56.50" y2="89.50" stroke="#cfcfcf" stroke-width="0.6"/>
<line x1="72.95" y1="83.30" x2="72.95" y2="89.50" stroke="#cfcfcf" stroke-width="0.6"/>
<line x1="89.40" y1="83.30" x2="89.40" y2="89.50" stroke="#cfcfcf" stroke-width="0.6"/>
<line x1="105.85" y1="83.30" x2="105.85" y2="89.50" stroke="#cfcfcf" stroke-width="0.6"/>
<line x1="122.30" y1="83.30" x2="122.30" y2="89.50" stroke="#cfcfcf" stroke-width="0.6"/>
<line x1="138.75" y1="83.30" x2="138.75" y2="89.50" stroke="#cfcfcf" stroke-width="0.6"/>
<line x1="155.20" y1="83.30" x2="155.20" y2="89.50" stroke="#cfcfcf" stroke-width="0.6"/>
<line x1="173.19" y1="83.30" x2="173.19" y2="89.50" stroke="#cfcfcf" stroke-width="0.6"/>
<line x1="191.18" y1="83.30" x2="191.18" y2="89.50" stroke="#cfcfcf" stroke-width="0.6"/>
<line x1="209.17" y1="83.30" x2="209.17" y2="89.50" stroke="#cfcfcf" stroke-width="0.6"/>
<line x1="227.16" y1="83.30" x2="227.16" y2="89.50" stroke="#cfcfcf" stroke-width="0.6"/>
<line x1="245.15" y1="83.30" x2="245.15" y2="89.50" stroke="#cfcfcf" stroke-width="0.6"/>
<line x1="263.14" y1="83.30" x2="263.14" y2="89.50" stroke="#cfcfcf" stroke-width="0.6"/>
<line x1="281.13" y1="83.30" x2="281.13" y2="89.50" stroke="#cfcfcf" stroke-width="0.6"/>
<line x1="299.12" y1="83.30" x2="299.12" y2="89.50" stroke="#cfcfcf" stroke-width="0.6"/>
<line x1="317.11" y1="83.30" x2="317.11" y2="89.50" stroke="#cfcfcf" stroke-width="0.6"/>
<line x1="335.10" y1="83.30" x2="335.10" y2="89.50" stroke="#cfcfcf" stroke-width="0.6"/>
<line x1="353.09" y1="83.30" x2="353.09" y2="89.50" stroke="#cfcfcf" stroke-width="0.6"/>
<line x1="371.08" y1="83.30" x2="371.08" y2="89.50" stroke="#cfcfcf" stroke-width="0.6"/>
<line x1="389.07" y1="83.30" x2="389.07" y2="89.50" stroke="#cfcfcf" stroke-width="0.6"/>
<line x1="407.06" y1="83.30" x2="407.06" y2="89.50" stroke="#cfcfcf" stroke-width="0.6"/>
<line x1="425.05" y1="83.30" x2="425.05" y2="89.50" stroke="#cfcfcf" stroke-width="0.6"/>
<line x1="443.04" y1="83.30" x2="443.04" y2="89.50" stroke="#cfcfcf" stroke-width="0.6"/>
<line x1="461.03" y1="83.30" x2="461.03" y2="89.50" stroke="#cfcfcf" stroke-width="0.6"/>
<line x1="479.02" y1="83.30" x2="479.02" y2="89.50" stroke="#cfcfcf" stroke-width="0.6"/>
<line x1="497.01" y1="83.30" x2="497.01" y2="89.50" stroke="#cfcfcf" stroke-width="0.6"/>
<line x1="515.00" y1="83.30" x2="515.00" y2="89.50" stroke="#cfcfcf" stroke-width="0.6"/>
<line x1="532.99" y1="83.30" x2="532.99" y2="89.50" stroke="#cfcfcf" stroke-width="0.6"/>
<line x1="550.98" y1="83.30" x2="550.98" y2="89.50" stroke="#cfcfcf" stroke-width="0.6"/>
<line x1="568.97" y1="83.30" x2="568.97" y2="89.50" stroke="#cfcfcf" stroke-width="0.6"/>
<line x1="586.96" y1="83.30" x2="586.96" y2="89.50" stroke="#cfcfcf" stroke-width="0.6"/>
<line x1="604.95" y1="83.30" x2="604.95" y2="89.50" stroke="#cfcfcf" stroke-width="0.6"/>
<line x1="622.94" y1="83.30" x2="622.94" y2="89.50" stroke="#cfcfcf" stroke-width="0.6"/>
<line x1="640.93" y1="83.30" x2="640.93" y2="89.50" stroke="#cfcfcf" stroke-width="0.6"/>
<line x1="658.92" y1="83.30" x2="658.92" y2="89.50" stroke="#cfcfcf" stroke-width="0.6"/>
<line x1="676.91" y1="83.30" x2="676.91" y2="89.50" stroke="#cfcfcf" stroke-width="0.6"/>
<line x1="694.90" y1="83.30" x2="694.90" y2="89.50" stroke="#cfcfcf" stroke-width="0.6"/>
<line x1="712.89" y1="83.30" x2="712.89" y2="89.50" stroke="#cfcfcf" stroke-width="0.6"/>
<line x1="730.88" y1="83.30" x2="730.88" y2="89.50" stroke="#cfcfcf" stroke-width="0.6"/>
<line x1="748.87" y1="83.30" x2="748.87" y2="89.50" stroke="#cfcfcf" stroke-width="0.6"/>
<line x1="0.00" y1="89.50" x2="759.50" y2="89.50" stroke="#c4c4c4" stroke-width="0.7"/>
<line x1="7.50" y1="82.50" x2="7.50" y2="444.00" stroke="#c4c4c4" stroke-width="0.7"/>
<line x1="0.00" y1="95.40" x2="7.50" y2="95.40" stroke="#d4d4d4" stroke-width="0.6"/>
<line x1="0.00" y1="107.60" x2="7.50" y2="107.60" stroke="#d4d4d4" stroke-width="0.6"/>
<line x1="0.00" y1="114.60" x2="7.50" y2="114.60" stroke="#d4d4d4" stroke-width="0.6"/>
<line x1="0.00" y1="121.00" x2="7.50" y2="121.00" stroke="#d4d4d4" stroke-width="0.6"/>
<line x1="0.00" y1="127.60" x2="7.50" y2="127.60" stroke="#d4d4d4" stroke-width="0.6"/>
<line x1="0.00" y1="134.40" x2="7.50" y2="134.40" stroke="#d4d4d4" stroke-width="0.6"/>
<line x1="0.00" y1="140.80" x2="7.50" y2="140.80" stroke="#d4d4d4" stroke-width="0.6"/>
<line x1="0.00" y1="147.20" x2="7.50" y2="147.20" stroke="#d4d4d4" stroke-width="0.6"/>
<line x1="0.00" y1="153.60" x2="7.50" y2="153.60" stroke="#d4d4d4" stroke-width="0.6"/>
<line x1="0.00" y1="160.00" x2="7.50" y2="160.00" stroke="#d4d4d4" stroke-width="0.6"/>
<line x1="0.00" y1="166.40" x2="7.50" y2="166.40" stroke="#d4d4d4" stroke-width="0.6"/>
<line x1="0.00" y1="172.80" x2="7.50" y2="172.80" stroke="#d4d4d4" stroke-width="0.6"/>
<line x1="0.00" y1="179.20" x2="7.50" y2="179.20" stroke="#d4d4d4" stroke-width="0.6"/>
<line x1="0.00" y1="185.60" x2="7.50" y2="185.60" stroke="#d4d4d4" stroke-width="0.6"/>
<line x1="0.00" y1="192.00" x2="7.50" y2="192.00" stroke="#d4d4d4" stroke-width="0.6"/>
<line x1="0.00" y1="198.40" x2="7.50" y2="198.40" stroke="#d4d4d4" stroke-width="0.6"/>
<line x1="0.00" y1="204.80" x2="7.50" y2="204.80" stroke="#d4d4d4" stroke-width="0.6"/>
<line x1="0.00" y1="211.20" x2="7.50" y2="211.20" stroke="#d4d4d4" stroke-width="0.6"/>
<line x1="0.00" y1="217.60" x2="7.50" y2="217.60" stroke="#d4d4d4" stroke-width="0.6"/>
<line x1="0.00" y1="224.00" x2="7.50" y2="224.00" stroke="#d4d4d4" stroke-width="0.6"/>
<line x1="0.00" y1="230.40" x2="7.50" y2="230.40" stroke="#d4d4d4" stroke-width="0.6"/>
<line x1="0.00" y1="236.80" x2="7.50" y2="236.80" stroke="#d4d4d4" stroke-width="0.6"/>
<line x1="0.00" y1="243.20" x2="7.50" y2="243.20" stroke="#d4d4d4" stroke-width="0.6"/>
<line x1="0.00" y1="249.60" x2="7.50" y2="249.60" stroke="#d4d4d4" stroke-width="0.6"/>
<line x1="0.00" y1="256.00" x2="7.50" y2="256.00" stroke="#d4d4d4" stroke-width="0.6"/>
<line x1="0.00" y1="262.40" x2="7.50" y2="262.40" stroke="#d4d4d4" stroke-width="0.6"/>
<line x1="0.00" y1="268.80" x2="7.50" y2="268.80" stroke="#d4d4d4" stroke-width="0.6"/>
<line x1="0.00" y1="275.20" x2="7.50" y2="275.20" stroke="#d4d4d4" stroke-width="0.6"/>
<line x1="0.00" y1="281.60" x2="7.50" y2="281.60" stroke="#d4d4d4" stroke-width="0.6"/>
<line x1="0.00" y1="288.00" x2="7.50" y2="288.00" stroke="#d4d4d4" stroke-width="0.6"/>
<line x1="0.00" y1="294.40" x2="7.50" y2="294.40" stroke="#d4d4d4" stroke-width="0.6"/>
<line x1="0.00" y1="300.80" x2="7.50" y2="300.80" stroke="#d4d4d4" stroke-width="0.6"/>
<line x1="0.00" y1="307.20" x2="7.50" y2="307.20" stroke="#d4d4d4" stroke-width="0.6"/>
<line x1="0.00" y1="313.60" x2="7.50" y2="313.60" stroke="#d4d4d4" stroke-width="0.6"/>
<line x1="0.00" y1="320.00" x2="7.50" y2="320.00" stroke="#d4d4d4" stroke-width="0.6"/>
<line x1="0.00" y1="326.40" x2="7.50" y2="326.40" stroke="#d4d4d4" stroke-width="0.6"/>
<line x1="0.00" y1="332.80" x2="7.50" y2="332.80" stroke="#d4d4d4" stroke-width="0.6"/>
<line x1="0.00" y1="339.20" x2="7.50" y2="339.20" stroke="#d4d4d4" stroke-width="0.6"/>
<line x1="0.00" y1="345.60" x2="7.50" y2="345.60" stroke="#d4d4d4" stroke-width="0.6"/>
<line x1="0.00" y1="352.00" x2="7.50" y2="352.00" stroke="#d4d4d4" stroke-width="0.6"/>
<line x1="0.00" y1="358.40" x2="7.50" y2="358.40" stroke="#d4d4d4" stroke-width="0.6"/>
<line x1="0.00" y1="364.80" x2="7.50" y2="364.80" stroke="#d4d4d4" stroke-width="0.6"/>
<line x1="0.00" y1="371.20" x2="7.50" y2="371.20" stroke="#d4d4d4" stroke-width="0.6"/>
<line x1="0.00" y1="377.60" x2="7.50" y2="377.60" stroke="#d4d4d4" stroke-width="0.6"/>
<line x1="0.00" y1="384.00" x2="7.50" y2="384.00" stroke="#d4d4d4" stroke-width="0.6"/>
<line x1="0.00" y1="390.40" x2="7.50" y2="390.40" stroke="#d4d4d4" stroke-width="0.6"/>
<line x1="0.00" y1="396.80" x2="7.50" y2="396.80" stroke="#d4d4d4" stroke-width="0.6"/>
<line x1="0.00" y1="403.20" x2="7.50" y2="403.20" stroke="#d4d4d4" stroke-width="0.6"/>
<line x1="0.00" y1="409.60" x2="7.50" y2="409.60" stroke="#d4d4d4" stroke-width="0.6"/>
<line x1="0.00" y1="416.00" x2="7.50" y2="416.00" stroke="#d4d4d4" stroke-width="0.6"/>
<line x1="0.00" y1="422.40" x2="7.50" y2="422.40" stroke="#d4d4d4" stroke-width="0.6"/>
<line x1="0.00" y1="428.80" x2="7.50" y2="428.80" stroke="#d4d4d4" stroke-width="0.6"/>
<line x1="0.00" y1="435.20" x2="7.50" y2="435.20" stroke="#d4d4d4" stroke-width="0.6"/>
<line x1="0.00" y1="441.60" x2="7.50" y2="441.60" stroke="#d4d4d4" stroke-width="0.6"/>
<text x="32.00" y="87.50" font-size="4.4" fill="#444" text-anchor="middle">B</text>
<text x="64.72" y="87.50" font-size="4.4" fill="#505050" text-anchor="middle" textLength="2.67" lengthAdjust="spacingAndGlyphs">C</text>
<text x="81.18" y="87.50" font-size="4.4" fill="#505050" text-anchor="middle" textLength="2.67" lengthAdjust="spacingAndGlyphs">D</text>
<text x="97.62" y="87.50" font-size="4.4" fill="#505050" text-anchor="middle" textLength="2.47" lengthAdjust="spacingAndGlyphs">E</text>
<text x="114.08" y="87.50" font-size="4.4" fill="#505050" text-anchor="middle" textLength="2.26" lengthAdjust="spacingAndGlyphs">F</text>
<text x="130.53" y="87.50" font-size="4.4" fill="#505050" text-anchor="middle" textLength="2.88" lengthAdjust="spacingAndGlyphs">G</text>
<text x="146.97" y="87.50" font-size="4.4" fill="#505050" text-anchor="middle" textLength="2.67" lengthAdjust="spacingAndGlyphs">H</text>
<text x="164.19" y="87.50" font-size="4.4" fill="#505050" text-anchor="middle" textLength="1.03" lengthAdjust="spacingAndGlyphs">I</text>
<text x="182.19" y="87.50" font-size="4.4" fill="#505050" text-anchor="middle" textLength="1.85" lengthAdjust="spacingAndGlyphs">J</text>
<text x="200.18" y="87.50" font-size="4.4" fill="#505050" text-anchor="middle" textLength="2.47" lengthAdjust="spacingAndGlyphs">K</text>
<text x="218.17" y="87.50" font-size="4.4" fill="#505050" text-anchor="middle" textLength="2.06" lengthAdjust="spacingAndGlyphs">L</text>
<text x="236.16" y="87.50" font-size="4.4" fill="#505050" text-anchor="middle" textLength="3.08" lengthAdjust="spacingAndGlyphs">M</text>
<text x="254.15" y="87.50" font-size="4.4" fill="#505050" text-anchor="middle" textLength="2.67" lengthAdjust="spacingAndGlyphs">N</text>
<text x="272.14" y="87.50" font-size="4.4" fill="#505050" text-anchor="middle" textLength="2.88" lengthAdjust="spacingAndGlyphs">O</text>
<text x="290.13" y="87.50" font-size="4.4" fill="#505050" text-anchor="middle" textLength="2.47" lengthAdjust="spacingAndGlyphs">P</text>
<text x="308.12" y="87.50" font-size="4.4" fill="#505050" text-anchor="middle" textLength="2.88" lengthAdjust="spacingAndGlyphs">Q</text>
<text x="326.11" y="87.50" font-size="4.4" fill="#505050" text-anchor="middle" textLength="2.67" lengthAdjust="spacingAndGlyphs">R</text>
<text x="344.10" y="87.50" font-size="4.4" fill="#505050" text-anchor="middle" textLength="2.47" lengthAdjust="spacingAndGlyphs">S</text>
<text x="362.09" y="87.50" font-size="4.4" fill="#505050" text-anchor="middle" textLength="2.26" lengthAdjust="spacingAndGlyphs">T</text>
<text x="380.08" y="87.50" font-size="4.4" fill="#505050" text-anchor="middle" textLength="2.67" lengthAdjust="spacingAndGlyphs">U</text>
<text x="398.07" y="87.50" font-size="4.4" fill="#505050" text-anchor="middle" textLength="2.47" lengthAdjust="spacingAndGlyphs">V</text>
<text x="416.06" y="87.50" font-size="4.4" fill="#505050" text-anchor="middle" textLength="3.49" lengthAdjust="spacingAndGlyphs">W</text>
<text x="434.05" y="87.50" font-size="4.4" fill="#505050" text-anchor="middle" textLength="2.47" lengthAdjust="spacingAndGlyphs">X</text>
<text x="452.04" y="87.50" font-size="4.4" fill="#505050" text-anchor="middle" textLength="2.47" lengthAdjust="spacingAndGlyphs">Y</text>
<text x="470.03" y="87.50" font-size="4.4" fill="#217346" text-anchor="middle" textLength="2.26" lengthAdjust="spacingAndGlyphs">Z</text>
<text x="488.02" y="87.50" font-size="4.4" fill="#505050" text-anchor="middle" textLength="4.94" lengthAdjust="spacingAndGlyphs">AA</text>
<text x="506.01" y="87.50" font-size="4.4" fill="#505050" text-anchor="middle" textLength="4.94" lengthAdjust="spacingAndGlyphs">AB</text>
<text x="524.00" y="87.50" font-size="4.4" fill="#505050" text-anchor="middle" textLength="5.14" lengthAdjust="spacingAndGlyphs">AC</text>
<text x="541.99" y="87.50" font-size="4.4" fill="#505050" text-anchor="middle" textLength="5.14" lengthAdjust="spacingAndGlyphs">AD</text>
<text x="559.98" y="87.50" font-size="4.4" fill="#505050" text-anchor="middle" textLength="4.94" lengthAdjust="spacingAndGlyphs">AE</text>
<text x="577.97" y="87.50" font-size="4.4" fill="#505050" text-anchor="middle" textLength="4.73" lengthAdjust="spacingAndGlyphs">AF</text>
<text x="595.96" y="87.50" font-size="4.4" fill="#505050" text-anchor="middle" textLength="5.35" lengthAdjust="spacingAndGlyphs">AG</text>
<text x="613.95" y="87.50" font-size="4.4" fill="#505050" text-anchor="middle" textLength="5.14" lengthAdjust="spacingAndGlyphs">AH</text>
<text x="631.94" y="87.50" font-size="4.4" fill="#505050" text-anchor="middle" textLength="3.50" lengthAdjust="spacingAndGlyphs">AI</text>
<text x="649.93" y="87.50" font-size="4.4" fill="#505050" text-anchor="middle" textLength="4.32" lengthAdjust="spacingAndGlyphs">AJ</text>
<text x="667.92" y="87.50" font-size="4.4" fill="#505050" text-anchor="middle" textLength="4.94" lengthAdjust="spacingAndGlyphs">AK</text>
<text x="685.91" y="87.50" font-size="4.4" fill="#505050" text-anchor="middle" textLength="4.53" lengthAdjust="spacingAndGlyphs">AL</text>
<text x="703.90" y="87.50" font-size="4.4" fill="#505050" text-anchor="middle" textLength="5.55" lengthAdjust="spacingAndGlyphs">AM</text>
<text x="721.89" y="87.50" font-size="4.4" fill="#505050" text-anchor="middle" textLength="5.14" lengthAdjust="spacingAndGlyphs">AN</text>
<text x="739.88" y="87.50" font-size="4.4" fill="#505050" text-anchor="middle" textLength="5.35" lengthAdjust="spacingAndGlyphs">AO</text>
<text x="757.87" y="87.50" font-size="4.4" fill="#505050" text-anchor="middle" textLength="4.94" lengthAdjust="spacingAndGlyphs">AP</text>
<path d="M2.6 88.4 l3.6 -3.6 v3.6z" fill="#b4b4b4"/>
<text x="3.90" y="94.00" font-size="4.5" fill="#606060" text-anchor="middle" textLength="2.45" lengthAdjust="spacingAndGlyphs">1</text>
<text x="3.90" y="106.20" font-size="4.5" fill="#606060" text-anchor="middle" textLength="2.45" lengthAdjust="spacingAndGlyphs">2</text>
<text x="3.90" y="113.20" font-size="4.5" fill="#606060" text-anchor="middle" textLength="2.45" lengthAdjust="spacingAndGlyphs">3</text>
<text x="3.90" y="119.60" font-size="4.5" fill="#606060" text-anchor="middle" textLength="2.45" lengthAdjust="spacingAndGlyphs">4</text>
<text x="3.90" y="126.20" font-size="4.5" fill="#606060" text-anchor="middle" textLength="2.45" lengthAdjust="spacingAndGlyphs">5</text>
<text x="3.90" y="133.00" font-size="4.5" fill="#606060" text-anchor="middle" textLength="2.45" lengthAdjust="spacingAndGlyphs">6</text>
<text x="3.90" y="139.40" font-size="4.5" fill="#606060" text-anchor="middle" textLength="2.45" lengthAdjust="spacingAndGlyphs">7</text>
<text x="3.90" y="145.80" font-size="4.5" fill="#606060" text-anchor="middle" textLength="2.45" lengthAdjust="spacingAndGlyphs">8</text>
<text x="3.90" y="152.20" font-size="4.5" fill="#606060" text-anchor="middle" textLength="2.45" lengthAdjust="spacingAndGlyphs">9</text>
<text x="3.90" y="158.60" font-size="4.5" fill="#606060" text-anchor="middle" textLength="4.16" lengthAdjust="spacingAndGlyphs">10</text>
<text x="3.90" y="165.00" font-size="4.5" fill="#606060" text-anchor="middle" textLength="3.88" lengthAdjust="spacingAndGlyphs">11</text>
<text x="3.90" y="171.40" font-size="4.5" fill="#606060" text-anchor="middle" textLength="4.16" lengthAdjust="spacingAndGlyphs">12</text>
<text x="3.90" y="177.80" font-size="4.5" fill="#606060" text-anchor="middle" textLength="4.16" lengthAdjust="spacingAndGlyphs">13</text>
<text x="3.90" y="184.20" font-size="4.5" fill="#606060" text-anchor="middle" textLength="4.16" lengthAdjust="spacingAndGlyphs">14</text>
<text x="3.90" y="190.60" font-size="4.5" fill="#606060" text-anchor="middle" textLength="4.16" lengthAdjust="spacingAndGlyphs">15</text>
<text x="3.90" y="197.00" font-size="4.5" fill="#606060" text-anchor="middle" textLength="4.16" lengthAdjust="spacingAndGlyphs">16</text>
<text x="3.90" y="203.40" font-size="4.5" fill="#606060" text-anchor="middle" textLength="4.16" lengthAdjust="spacingAndGlyphs">17</text>
<text x="3.90" y="209.80" font-size="4.5" fill="#606060" text-anchor="middle" textLength="4.16" lengthAdjust="spacingAndGlyphs">18</text>
<text x="3.90" y="216.20" font-size="4.5" fill="#606060" text-anchor="middle" textLength="4.16" lengthAdjust="spacingAndGlyphs">19</text>
<text x="3.90" y="222.60" font-size="4.5" fill="#606060" text-anchor="middle" textLength="4.16" lengthAdjust="spacingAndGlyphs">20</text>
<text x="3.90" y="229.00" font-size="4.5" fill="#606060" text-anchor="middle" textLength="4.16" lengthAdjust="spacingAndGlyphs">21</text>
<text x="3.90" y="235.40" font-size="4.5" fill="#217346" text-anchor="middle" textLength="4.16" lengthAdjust="spacingAndGlyphs">22</text>
<text x="3.90" y="241.80" font-size="4.5" fill="#606060" text-anchor="middle" textLength="4.16" lengthAdjust="spacingAndGlyphs">23</text>
<text x="3.90" y="248.20" font-size="4.5" fill="#606060" text-anchor="middle" textLength="4.16" lengthAdjust="spacingAndGlyphs">24</text>
<text x="3.90" y="254.60" font-size="4.5" fill="#606060" text-anchor="middle" textLength="4.16" lengthAdjust="spacingAndGlyphs">25</text>
<text x="3.90" y="261.00" font-size="4.5" fill="#606060" text-anchor="middle" textLength="4.16" lengthAdjust="spacingAndGlyphs">26</text>
<text x="3.90" y="267.40" font-size="4.5" fill="#606060" text-anchor="middle" textLength="4.16" lengthAdjust="spacingAndGlyphs">27</text>
<text x="3.90" y="273.80" font-size="4.5" fill="#606060" text-anchor="middle" textLength="4.16" lengthAdjust="spacingAndGlyphs">28</text>
<text x="3.90" y="280.20" font-size="4.5" fill="#606060" text-anchor="middle" textLength="4.16" lengthAdjust="spacingAndGlyphs">29</text>
<text x="3.90" y="286.60" font-size="4.5" fill="#606060" text-anchor="middle" textLength="4.16" lengthAdjust="spacingAndGlyphs">30</text>
<text x="3.90" y="293.00" font-size="4.5" fill="#606060" text-anchor="middle" textLength="4.16" lengthAdjust="spacingAndGlyphs">31</text>
<text x="3.90" y="299.40" font-size="4.5" fill="#606060" text-anchor="middle" textLength="4.16" lengthAdjust="spacingAndGlyphs">32</text>
<text x="3.90" y="305.80" font-size="4.5" fill="#606060" text-anchor="middle" textLength="4.16" lengthAdjust="spacingAndGlyphs">33</text>
<text x="3.90" y="312.20" font-size="4.5" fill="#606060" text-anchor="middle" textLength="4.16" lengthAdjust="spacingAndGlyphs">34</text>
<text x="3.90" y="318.60" font-size="4.5" fill="#606060" text-anchor="middle" textLength="4.16" lengthAdjust="spacingAndGlyphs">35</text>
<text x="3.90" y="325.00" font-size="4.5" fill="#606060" text-anchor="middle" textLength="4.16" lengthAdjust="spacingAndGlyphs">36</text>
<text x="3.90" y="331.40" font-size="4.5" fill="#606060" text-anchor="middle" textLength="4.16" lengthAdjust="spacingAndGlyphs">37</text>
<text x="3.90" y="337.80" font-size="4.5" fill="#606060" text-anchor="middle" textLength="4.16" lengthAdjust="spacingAndGlyphs">38</text>
<text x="3.90" y="344.20" font-size="4.5" fill="#606060" text-anchor="middle" textLength="4.16" lengthAdjust="spacingAndGlyphs">39</text>
<text x="3.90" y="350.60" font-size="4.5" fill="#606060" text-anchor="middle" textLength="4.16" lengthAdjust="spacingAndGlyphs">40</text>
<text x="3.90" y="357.00" font-size="4.5" fill="#606060" text-anchor="middle" textLength="4.16" lengthAdjust="spacingAndGlyphs">41</text>
<text x="3.90" y="363.40" font-size="4.5" fill="#606060" text-anchor="middle" textLength="4.16" lengthAdjust="spacingAndGlyphs">42</text>
<text x="3.90" y="369.80" font-size="4.5" fill="#606060" text-anchor="middle" textLength="4.16" lengthAdjust="spacingAndGlyphs">43</text>
<text x="3.90" y="376.20" font-size="4.5" fill="#606060" text-anchor="middle" textLength="4.16" lengthAdjust="spacingAndGlyphs">44</text>
<text x="3.90" y="382.60" font-size="4.5" fill="#606060" text-anchor="middle" textLength="4.16" lengthAdjust="spacingAndGlyphs">45</text>
<text x="3.90" y="389.00" font-size="4.5" fill="#606060" text-anchor="middle" textLength="4.16" lengthAdjust="spacingAndGlyphs">46</text>
<text x="3.90" y="395.40" font-size="4.5" fill="#606060" text-anchor="middle" textLength="4.16" lengthAdjust="spacingAndGlyphs">47</text>
<text x="3.90" y="401.80" font-size="4.5" fill="#606060" text-anchor="middle" textLength="4.16" lengthAdjust="spacingAndGlyphs">48</text>
<text x="3.90" y="408.20" font-size="4.5" fill="#606060" text-anchor="middle" textLength="4.16" lengthAdjust="spacingAndGlyphs">49</text>
<text x="3.90" y="414.60" font-size="4.5" fill="#606060" text-anchor="middle" textLength="4.16" lengthAdjust="spacingAndGlyphs">50</text>
<text x="3.90" y="421.00" font-size="4.5" fill="#606060" text-anchor="middle" textLength="4.16" lengthAdjust="spacingAndGlyphs">51</text>
<text x="3.90" y="427.40" font-size="4.5" fill="#606060" text-anchor="middle" textLength="4.16" lengthAdjust="spacingAndGlyphs">52</text>
<text x="3.90" y="433.80" font-size="4.5" fill="#606060" text-anchor="middle" textLength="4.16" lengthAdjust="spacingAndGlyphs">53</text>
<text x="3.90" y="440.20" font-size="4.5" fill="#606060" text-anchor="middle" textLength="4.16" lengthAdjust="spacingAndGlyphs">54</text>
<text x="3.90" y="446.60" font-size="4.5" fill="#606060" text-anchor="middle" textLength="4.16" lengthAdjust="spacingAndGlyphs">55</text>
<rect x="7.50" y="107.40" width="752.00" height="7.10" fill="#ffff00"/>
<rect x="7.50" y="294.90" width="131.25" height="5.80" fill="#f1f1f4"/>
<rect x="7.50" y="301.30" width="131.25" height="5.80" fill="#f1f1f4"/>
<rect x="7.50" y="307.70" width="131.25" height="5.80" fill="#f1f1f4"/>
<text x="9.80" y="104.70" font-size="8.6" fill="#111" font-weight="bold" textLength="59.20" lengthAdjust="spacingAndGlyphs">Financial model</text>
<text x="8.90" y="112.60" font-size="5.0" fill="#111" font-weight="bold" textLength="49.50" lengthAdjust="spacingAndGlyphs">Presentation Solutions</text>
<text x="9.00" y="126.30" font-size="5.0" fill="#444" textLength="30.00" lengthAdjust="spacingAndGlyphs">Balance sheet</text>
<text x="72.05" y="139.00" font-size="4.9" fill="#111" text-anchor="end" font-weight="bold" textLength="9.79" lengthAdjust="spacingAndGlyphs">2014</text>
<text x="88.50" y="139.00" font-size="4.9" fill="#111" text-anchor="end" font-weight="bold" textLength="9.79" lengthAdjust="spacingAndGlyphs">2015</text>
<text x="104.95" y="139.00" font-size="4.9" fill="#111" text-anchor="end" font-weight="bold" textLength="9.79" lengthAdjust="spacingAndGlyphs">2016</text>
<text x="121.40" y="139.00" font-size="4.9" fill="#111" text-anchor="end" font-weight="bold" textLength="9.79" lengthAdjust="spacingAndGlyphs">2017</text>
<text x="137.85" y="139.00" font-size="4.9" fill="#111" text-anchor="end" font-weight="bold" textLength="9.79" lengthAdjust="spacingAndGlyphs">2018</text>
<text x="154.30" y="139.00" font-size="4.9" fill="#111" text-anchor="end" font-weight="bold" textLength="9.79" lengthAdjust="spacingAndGlyphs">2019</text>
<text x="9.10" y="145.50" font-size="4.7" fill="#333" textLength="35.48" lengthAdjust="spacingAndGlyphs">Non-current assets</text>
<text x="72.05" y="145.40" font-size="4.6" fill="#333" text-anchor="end" textLength="4.56" lengthAdjust="spacingAndGlyphs">74</text>
<text x="88.50" y="145.40" font-size="4.6" fill="#333" text-anchor="end" textLength="7.98" lengthAdjust="spacingAndGlyphs">73.2</text>
<text x="104.95" y="145.40" font-size="4.6" fill="#333" text-anchor="end" textLength="10.26" lengthAdjust="spacingAndGlyphs">81.16</text>
<text x="121.40" y="145.40" font-size="4.6" fill="#333" text-anchor="end" textLength="12.54" lengthAdjust="spacingAndGlyphs">69.928</text>
<text x="137.85" y="145.40" font-size="4.6" fill="#333" text-anchor="end" textLength="12.54" lengthAdjust="spacingAndGlyphs">85.942</text>
<text x="154.30" y="145.40" font-size="4.6" fill="#333" text-anchor="end" textLength="12.54" lengthAdjust="spacingAndGlyphs">83.754</text>
<text x="9.10" y="151.90" font-size="4.6" fill="#111" font-weight="bold" textLength="31.51" lengthAdjust="spacingAndGlyphs">Current assets</text>
<text x="9.10" y="158.30" font-size="4.7" fill="#333" textLength="33.23" lengthAdjust="spacingAndGlyphs">Trade receivables</text>
<text x="72.05" y="158.20" font-size="4.6" fill="#333" text-anchor="end" textLength="12.54" lengthAdjust="spacingAndGlyphs">13.333</text>
<text x="88.50" y="158.20" font-size="4.6" fill="#333" text-anchor="end" textLength="4.56" lengthAdjust="spacingAndGlyphs">14</text>
<text x="104.95" y="158.20" font-size="4.6" fill="#333" text-anchor="end" textLength="7.98" lengthAdjust="spacingAndGlyphs">14.7</text>
<text x="121.40" y="158.20" font-size="4.6" fill="#333" text-anchor="end" textLength="12.54" lengthAdjust="spacingAndGlyphs">15.435</text>
<text x="137.85" y="158.20" font-size="4.6" fill="#333" text-anchor="end" textLength="12.54" lengthAdjust="spacingAndGlyphs">16.207</text>
<text x="154.30" y="158.20" font-size="4.6" fill="#333" text-anchor="end" textLength="12.54" lengthAdjust="spacingAndGlyphs">17.017</text>
<text x="9.10" y="164.70" font-size="4.7" fill="#333" textLength="17.28" lengthAdjust="spacingAndGlyphs">Inventory</text>
<text x="72.05" y="164.60" font-size="4.6" fill="#333" text-anchor="end" textLength="4.56" lengthAdjust="spacingAndGlyphs">20</text>
<text x="88.50" y="164.60" font-size="4.6" fill="#333" text-anchor="end" textLength="4.56" lengthAdjust="spacingAndGlyphs">21</text>
<text x="104.95" y="164.60" font-size="4.6" fill="#333" text-anchor="end" textLength="10.26" lengthAdjust="spacingAndGlyphs">22.05</text>
<text x="121.40" y="164.60" font-size="4.6" fill="#333" text-anchor="end" textLength="12.54" lengthAdjust="spacingAndGlyphs">23.153</text>
<text x="137.85" y="164.60" font-size="4.6" fill="#333" text-anchor="end" textLength="10.26" lengthAdjust="spacingAndGlyphs">24.31</text>
<text x="154.30" y="164.60" font-size="4.6" fill="#333" text-anchor="end" textLength="12.54" lengthAdjust="spacingAndGlyphs">25.526</text>
<text x="9.10" y="171.10" font-size="4.7" fill="#333" textLength="43.66" lengthAdjust="spacingAndGlyphs">Prepayments and other</text>
<text x="72.05" y="171.00" font-size="4.6" fill="#333" text-anchor="end" textLength="2.28" lengthAdjust="spacingAndGlyphs">5</text>
<text x="88.50" y="171.00" font-size="4.6" fill="#333" text-anchor="end" textLength="7.98" lengthAdjust="spacingAndGlyphs">5.25</text>
<text x="104.95" y="171.00" font-size="4.6" fill="#333" text-anchor="end" textLength="12.54" lengthAdjust="spacingAndGlyphs">5.5125</text>
<text x="121.40" y="171.00" font-size="4.6" fill="#333" text-anchor="end" textLength="12.54" lengthAdjust="spacingAndGlyphs">5.7881</text>
<text x="137.85" y="171.00" font-size="4.6" fill="#333" text-anchor="end" textLength="12.54" lengthAdjust="spacingAndGlyphs">6.0775</text>
<text x="154.30" y="171.00" font-size="4.6" fill="#333" text-anchor="end" textLength="12.54" lengthAdjust="spacingAndGlyphs">6.3814</text>
<text x="9.10" y="177.50" font-size="4.7" fill="#333" textLength="40.39" lengthAdjust="spacingAndGlyphs">Cash and equivalents</text>
<text x="72.05" y="177.40" font-size="4.6" fill="#333" text-anchor="end" textLength="2.28" lengthAdjust="spacingAndGlyphs">8</text>
<text x="88.50" y="177.40" font-size="4.6" fill="#333" text-anchor="end" textLength="12.54" lengthAdjust="spacingAndGlyphs">9.9508</text>
<text x="104.95" y="177.40" font-size="4.6" fill="#333" text-anchor="end" textLength="11.63" lengthAdjust="spacingAndGlyphs">-4.928</text>
<text x="121.40" y="177.40" font-size="4.6" fill="#333" text-anchor="end" textLength="12.54" lengthAdjust="spacingAndGlyphs">6.5347</text>
<text x="137.85" y="177.40" font-size="4.6" fill="#333" text-anchor="end" textLength="11.63" lengthAdjust="spacingAndGlyphs">-1.948</text>
<text x="154.30" y="177.40" font-size="4.6" fill="#333" text-anchor="end" textLength="12.54" lengthAdjust="spacingAndGlyphs">2.9443</text>
<text x="9.10" y="183.90" font-size="4.7" fill="#333" textLength="8.87" lengthAdjust="spacingAndGlyphs">Total</text>
<text x="72.05" y="183.80" font-size="4.6" fill="#333" text-anchor="end" textLength="12.54" lengthAdjust="spacingAndGlyphs">46.333</text>
<text x="88.50" y="183.80" font-size="4.6" fill="#333" text-anchor="end" textLength="12.54" lengthAdjust="spacingAndGlyphs">50.201</text>
<text x="104.95" y="183.80" font-size="4.6" fill="#333" text-anchor="end" textLength="12.54" lengthAdjust="spacingAndGlyphs">37.335</text>
<text x="121.40" y="183.80" font-size="4.6" fill="#333" text-anchor="end" textLength="10.26" lengthAdjust="spacingAndGlyphs">50.51</text>
<text x="137.85" y="183.80" font-size="4.6" fill="#333" text-anchor="end" textLength="12.54" lengthAdjust="spacingAndGlyphs">44.646</text>
<text x="154.30" y="183.80" font-size="4.6" fill="#333" text-anchor="end" textLength="12.54" lengthAdjust="spacingAndGlyphs">51.868</text>
<text x="9.10" y="190.30" font-size="4.6" fill="#111" font-weight="bold" textLength="36.76" lengthAdjust="spacingAndGlyphs">Current liabilities</text>
<text x="9.10" y="196.70" font-size="4.7" fill="#333" textLength="28.80" lengthAdjust="spacingAndGlyphs">Trade payables</text>
<text x="72.05" y="196.60" font-size="4.6" fill="#333" text-anchor="end" textLength="2.28" lengthAdjust="spacingAndGlyphs">8</text>
<text x="88.50" y="196.60" font-size="4.6" fill="#333" text-anchor="end" textLength="7.98" lengthAdjust="spacingAndGlyphs">7.35</text>
<text x="104.95" y="196.60" font-size="4.6" fill="#333" text-anchor="end" textLength="10.26" lengthAdjust="spacingAndGlyphs">9.261</text>
<text x="121.40" y="196.60" font-size="4.6" fill="#333" text-anchor="end" textLength="12.54" lengthAdjust="spacingAndGlyphs">7.8719</text>
<text x="137.85" y="196.60" font-size="4.6" fill="#333" text-anchor="end" textLength="12.54" lengthAdjust="spacingAndGlyphs">7.7792</text>
<text x="154.30" y="196.60" font-size="4.6" fill="#333" text-anchor="end" textLength="12.54" lengthAdjust="spacingAndGlyphs">9.4445</text>
<text x="9.10" y="203.10" font-size="4.7" fill="#333" textLength="28.48" lengthAdjust="spacingAndGlyphs">Other payables</text>
<text x="72.05" y="203.00" font-size="4.6" fill="#333" text-anchor="end" textLength="2.28" lengthAdjust="spacingAndGlyphs">2</text>
<text x="88.50" y="203.00" font-size="4.6" fill="#333" text-anchor="end" textLength="12.54" lengthAdjust="spacingAndGlyphs">1.8375</text>
<text x="104.95" y="203.00" font-size="4.6" fill="#333" text-anchor="end" textLength="12.54" lengthAdjust="spacingAndGlyphs">2.3153</text>
<text x="121.40" y="203.00" font-size="4.6" fill="#333" text-anchor="end" textLength="10.26" lengthAdjust="spacingAndGlyphs">1.968</text>
<text x="137.85" y="203.00" font-size="4.6" fill="#333" text-anchor="end" textLength="12.54" lengthAdjust="spacingAndGlyphs">1.9448</text>
<text x="154.30" y="203.00" font-size="4.6" fill="#333" text-anchor="end" textLength="12.24" lengthAdjust="spacingAndGlyphs">2.3611</text>
<text x="9.10" y="209.50" font-size="4.7" fill="#333" textLength="8.87" lengthAdjust="spacingAndGlyphs">Total</text>
<text x="72.05" y="209.40" font-size="4.6" fill="#333" text-anchor="end" textLength="4.56" lengthAdjust="spacingAndGlyphs">10</text>
<text x="88.50" y="209.40" font-size="4.6" fill="#333" text-anchor="end" textLength="12.54" lengthAdjust="spacingAndGlyphs">9.1875</text>
<text x="104.95" y="209.40" font-size="4.6" fill="#333" text-anchor="end" textLength="12.24" lengthAdjust="spacingAndGlyphs">11.576</text>
<text x="121.40" y="209.40" font-size="4.6" fill="#333" text-anchor="end" textLength="12.54" lengthAdjust="spacingAndGlyphs">9.8398</text>
<text x="137.85" y="209.40" font-size="4.6" fill="#333" text-anchor="end" textLength="12.54" lengthAdjust="spacingAndGlyphs">9.7241</text>
<text x="154.30" y="209.40" font-size="4.6" fill="#333" text-anchor="end" textLength="12.24" lengthAdjust="spacingAndGlyphs">11.806</text>
<text x="9.10" y="215.90" font-size="4.6" fill="#111" font-weight="bold" textLength="39.27" lengthAdjust="spacingAndGlyphs">Net current assets</text>
<text x="72.05" y="215.90" font-size="4.8" fill="#1a1a1a" text-anchor="end" font-weight="bold" textLength="13.01" lengthAdjust="spacingAndGlyphs">36.33</text>
<text x="88.50" y="215.90" font-size="4.8" fill="#1a1a1a" text-anchor="end" font-weight="bold" textLength="13.01" lengthAdjust="spacingAndGlyphs">41.01</text>
<text x="104.95" y="215.90" font-size="4.8" fill="#1a1a1a" text-anchor="end" font-weight="bold" textLength="13.01" lengthAdjust="spacingAndGlyphs">25.76</text>
<text x="121.40" y="215.90" font-size="4.8" fill="#1a1a1a" text-anchor="end" font-weight="bold" textLength="13.01" lengthAdjust="spacingAndGlyphs">41.07</text>
<text x="137.85" y="215.90" font-size="4.8" fill="#1a1a1a" text-anchor="end" font-weight="bold" textLength="13.01" lengthAdjust="spacingAndGlyphs">34.92</text>
<text x="154.30" y="215.90" font-size="4.8" fill="#1a1a1a" text-anchor="end" font-weight="bold" textLength="13.01" lengthAdjust="spacingAndGlyphs">40.06</text>
<text x="9.10" y="222.30" font-size="4.7" fill="#333" textLength="36.18" lengthAdjust="spacingAndGlyphs">Long-term liabilities</text>
<text x="72.05" y="222.20" font-size="4.6" fill="#333" text-anchor="end" textLength="4.56" lengthAdjust="spacingAndGlyphs">50</text>
<text x="88.50" y="222.20" font-size="4.6" fill="#333" text-anchor="end" textLength="4.56" lengthAdjust="spacingAndGlyphs">45</text>
<text x="104.95" y="222.20" font-size="4.6" fill="#333" text-anchor="end" textLength="7.98" lengthAdjust="spacingAndGlyphs">40.5</text>
<text x="121.40" y="222.20" font-size="4.6" fill="#333" text-anchor="end" textLength="10.26" lengthAdjust="spacingAndGlyphs">36.45</text>
<text x="137.85" y="222.20" font-size="4.6" fill="#333" text-anchor="end" textLength="12.54" lengthAdjust="spacingAndGlyphs">32.805</text>
<text x="154.30" y="222.20" font-size="4.6" fill="#333" text-anchor="end" textLength="12.54" lengthAdjust="spacingAndGlyphs">29.525</text>
<text x="9.10" y="228.70" font-size="4.6" fill="#111" font-weight="bold" textLength="22.51" lengthAdjust="spacingAndGlyphs">Net assets</text>
<text x="72.05" y="228.70" font-size="4.8" fill="#1a1a1a" text-anchor="end" font-weight="bold" textLength="13.01" lengthAdjust="spacingAndGlyphs">60.33</text>
<text x="88.50" y="228.70" font-size="4.8" fill="#1a1a1a" text-anchor="end" font-weight="bold" textLength="13.01" lengthAdjust="spacingAndGlyphs">66.21</text>
<text x="104.95" y="228.70" font-size="4.8" fill="#1a1a1a" text-anchor="end" font-weight="bold" textLength="13.01" lengthAdjust="spacingAndGlyphs">68.42</text>
<text x="121.40" y="228.70" font-size="4.8" fill="#1a1a1a" text-anchor="end" font-weight="bold" textLength="13.01" lengthAdjust="spacingAndGlyphs">74.55</text>
<text x="137.85" y="228.70" font-size="4.8" fill="#1a1a1a" text-anchor="end" font-weight="bold" textLength="13.01" lengthAdjust="spacingAndGlyphs">88.06</text>
<text x="154.30" y="228.70" font-size="4.8" fill="#1a1a1a" text-anchor="end" font-weight="bold" textLength="13.01" lengthAdjust="spacingAndGlyphs">94.29</text>
<text x="9.10" y="235.10" font-size="4.6" fill="#111" font-weight="bold" textLength="44.40" lengthAdjust="spacingAndGlyphs">'Shareholders' funds</text>
<text x="9.10" y="241.50" font-size="4.7" fill="#333" textLength="33.15" lengthAdjust="spacingAndGlyphs">Opening reserves</text>
<text x="72.05" y="241.40" font-size="4.6" fill="#333" text-anchor="end" textLength="12.54" lengthAdjust="spacingAndGlyphs">58.333</text>
<text x="88.50" y="241.40" font-size="4.6" fill="#333" text-anchor="end" textLength="12.54" lengthAdjust="spacingAndGlyphs">60.333</text>
<text x="104.95" y="241.40" font-size="4.6" fill="#333" text-anchor="end" textLength="12.54" lengthAdjust="spacingAndGlyphs">66.213</text>
<text x="121.40" y="241.40" font-size="4.6" fill="#333" text-anchor="end" textLength="12.54" lengthAdjust="spacingAndGlyphs">66.419</text>
<text x="137.85" y="241.40" font-size="4.6" fill="#333" text-anchor="end" textLength="12.54" lengthAdjust="spacingAndGlyphs">74.549</text>
<text x="154.30" y="241.40" font-size="4.6" fill="#333" text-anchor="end" textLength="10.26" lengthAdjust="spacingAndGlyphs">88.06</text>
<text x="9.10" y="247.90" font-size="4.7" fill="#333" textLength="42.72" lengthAdjust="spacingAndGlyphs">Retained profit for year</text>
<text x="72.05" y="247.80" font-size="4.6" fill="#333" text-anchor="end" textLength="2.28" lengthAdjust="spacingAndGlyphs">2</text>
<text x="88.50" y="247.80" font-size="4.6" fill="#333" text-anchor="end" textLength="7.98" lengthAdjust="spacingAndGlyphs">5.88</text>
<text x="104.95" y="247.80" font-size="4.6" fill="#333" text-anchor="end" textLength="12.54" lengthAdjust="spacingAndGlyphs">0.2052</text>
<text x="121.40" y="247.80" font-size="4.6" fill="#333" text-anchor="end" textLength="7.98" lengthAdjust="spacingAndGlyphs">8.13</text>
<text x="137.85" y="247.80" font-size="4.6" fill="#333" text-anchor="end" textLength="12.24" lengthAdjust="spacingAndGlyphs">13.511</text>
<text x="154.30" y="247.80" font-size="4.6" fill="#333" text-anchor="end" textLength="12.54" lengthAdjust="spacingAndGlyphs">6.2326</text>
<text x="9.10" y="254.30" font-size="4.6" fill="#111" font-weight="bold" textLength="22.51" lengthAdjust="spacingAndGlyphs">Net assets</text>
<text x="72.05" y="254.30" font-size="4.8" fill="#1a1a1a" text-anchor="end" font-weight="bold" textLength="13.01" lengthAdjust="spacingAndGlyphs">60.33</text>
<text x="88.50" y="254.30" font-size="4.8" fill="#1a1a1a" text-anchor="end" font-weight="bold" textLength="13.01" lengthAdjust="spacingAndGlyphs">66.21</text>
<text x="104.95" y="254.30" font-size="4.8" fill="#1a1a1a" text-anchor="end" font-weight="bold" textLength="13.01" lengthAdjust="spacingAndGlyphs">68.42</text>
<text x="121.40" y="254.30" font-size="4.8" fill="#1a1a1a" text-anchor="end" font-weight="bold" textLength="13.01" lengthAdjust="spacingAndGlyphs">74.55</text>
<text x="137.85" y="254.30" font-size="4.8" fill="#1a1a1a" text-anchor="end" font-weight="bold" textLength="13.01" lengthAdjust="spacingAndGlyphs">88.06</text>
<text x="154.30" y="254.30" font-size="4.8" fill="#1a1a1a" text-anchor="end" font-weight="bold" textLength="13.01" lengthAdjust="spacingAndGlyphs">94.29</text>
<text x="9.10" y="286.30" font-size="4.5" fill="#444" font-style="italic" textLength="11.90" lengthAdjust="spacingAndGlyphs">Check</text>
<text x="72.05" y="286.20" font-size="4.5" fill="#444" text-anchor="end" font-style="italic" textLength="2.28" lengthAdjust="spacingAndGlyphs">0</text>
<text x="88.50" y="286.20" font-size="4.5" fill="#444" text-anchor="end" font-style="italic" textLength="2.28" lengthAdjust="spacingAndGlyphs">0</text>
<text x="104.95" y="286.20" font-size="4.5" fill="#444" text-anchor="end" font-style="italic" textLength="2.28" lengthAdjust="spacingAndGlyphs">0</text>
<text x="121.40" y="286.20" font-size="4.5" fill="#444" text-anchor="end" font-style="italic" textLength="2.28" lengthAdjust="spacingAndGlyphs">0</text>
<text x="137.85" y="286.20" font-size="4.5" fill="#444" text-anchor="end" font-style="italic" textLength="2.28" lengthAdjust="spacingAndGlyphs">0</text>
<text x="154.30" y="286.20" font-size="4.5" fill="#444" text-anchor="end" font-style="italic" textLength="2.28" lengthAdjust="spacingAndGlyphs">0</text>
<text x="9.10" y="299.10" font-size="4.7" fill="#333" textLength="35.48" lengthAdjust="spacingAndGlyphs">Net working capital</text>
<text x="72.05" y="299.00" font-size="4.6" fill="#333" text-anchor="end" textLength="12.54" lengthAdjust="spacingAndGlyphs">28.333</text>
<text x="88.50" y="299.00" font-size="4.6" fill="#333" text-anchor="end" textLength="12.54" lengthAdjust="spacingAndGlyphs">31.063</text>
<text x="104.95" y="299.00" font-size="4.6" fill="#333" text-anchor="end" textLength="12.54" lengthAdjust="spacingAndGlyphs">30.606</text>
<text x="121.40" y="299.00" font-size="4.6" fill="#333" text-anchor="end" textLength="12.54" lengthAdjust="spacingAndGlyphs">34.536</text>
<text x="137.85" y="299.00" font-size="4.6" fill="#333" text-anchor="end" textLength="10.26" lengthAdjust="spacingAndGlyphs">36.67</text>
<text x="154.30" y="299.00" font-size="4.6" fill="#333" text-anchor="end" textLength="12.24" lengthAdjust="spacingAndGlyphs">37.119</text>
<text x="9.10" y="305.50" font-size="4.7" fill="#333" textLength="9.80" lengthAdjust="spacingAndGlyphs">Cash</text>
<text x="72.05" y="305.40" font-size="4.6" fill="#333" text-anchor="end" textLength="2.28" lengthAdjust="spacingAndGlyphs">8</text>
<text x="88.50" y="305.40" font-size="4.6" fill="#333" text-anchor="end" textLength="12.54" lengthAdjust="spacingAndGlyphs">9.9508</text>
<text x="104.95" y="305.40" font-size="4.6" fill="#333" text-anchor="end" textLength="11.63" lengthAdjust="spacingAndGlyphs">-4.928</text>
<text x="121.40" y="305.40" font-size="4.6" fill="#333" text-anchor="end" textLength="12.54" lengthAdjust="spacingAndGlyphs">6.5347</text>
<text x="137.85" y="305.40" font-size="4.6" fill="#333" text-anchor="end" textLength="11.63" lengthAdjust="spacingAndGlyphs">-1.948</text>
<text x="154.30" y="305.40" font-size="4.6" fill="#333" text-anchor="end" textLength="12.54" lengthAdjust="spacingAndGlyphs">2.9443</text>
<text x="9.10" y="311.90" font-size="4.7" fill="#333" textLength="28.48" lengthAdjust="spacingAndGlyphs">Long-term debt</text>
<text x="72.05" y="311.80" font-size="4.6" fill="#333" text-anchor="end" textLength="4.56" lengthAdjust="spacingAndGlyphs">50</text>
<text x="88.50" y="311.80" font-size="4.6" fill="#333" text-anchor="end" textLength="4.56" lengthAdjust="spacingAndGlyphs">45</text>
<text x="104.95" y="311.80" font-size="4.6" fill="#333" text-anchor="end" textLength="7.98" lengthAdjust="spacingAndGlyphs">40.5</text>
<text x="121.40" y="311.80" font-size="4.6" fill="#333" text-anchor="end" textLength="10.26" lengthAdjust="spacingAndGlyphs">36.45</text>
<text x="137.85" y="311.80" font-size="4.6" fill="#333" text-anchor="end" textLength="12.54" lengthAdjust="spacingAndGlyphs">32.805</text>
<text x="154.30" y="311.80" font-size="4.6" fill="#333" text-anchor="end" textLength="12.54" lengthAdjust="spacingAndGlyphs">29.525</text>
<rect x="460.83" y="230.10" width="18.19" height="6.70" fill="none" stroke="#217346" stroke-width="1.0"/>
<rect x="478.02" y="235.80" width="1.60" height="1.60" fill="#217346"/>
<rect x="181.00" y="124.00" width="135.80" height="72.70" fill="#ffffff" stroke="#d9d9d9" stroke-width="0.5"/>
<line x1="192.30" y1="186.50" x2="312.00" y2="186.50" stroke="#d9d9d9" stroke-width="0.45"/>
<text x="188.60" y="187.60" font-size="3.5" fill="#4a4a4a" text-anchor="end">0</text>
<line x1="192.30" y1="180.70" x2="312.00" y2="180.70" stroke="#d9d9d9" stroke-width="0.45"/>
<text x="188.60" y="181.80" font-size="3.5" fill="#4a4a4a" text-anchor="end">10</text>
<line x1="192.30" y1="174.90" x2="312.00" y2="174.90" stroke="#d9d9d9" stroke-width="0.45"/>
<text x="188.60" y="176.00" font-size="3.5" fill="#4a4a4a" text-anchor="end">20</text>
<line x1="192.30" y1="169.10" x2="312.00" y2="169.10" stroke="#d9d9d9" stroke-width="0.45"/>
<text x="188.60" y="170.20" font-size="3.5" fill="#4a4a4a" text-anchor="end">30</text>
<line x1="192.30" y1="163.30" x2="312.00" y2="163.30" stroke="#d9d9d9" stroke-width="0.45"/>
<text x="188.60" y="164.40" font-size="3.5" fill="#4a4a4a" text-anchor="end">40</text>
<line x1="192.30" y1="157.50" x2="312.00" y2="157.50" stroke="#d9d9d9" stroke-width="0.45"/>
<text x="188.60" y="158.60" font-size="3.5" fill="#4a4a4a" text-anchor="end">50</text>
<line x1="192.30" y1="151.70" x2="312.00" y2="151.70" stroke="#d9d9d9" stroke-width="0.45"/>
<text x="188.60" y="152.80" font-size="3.5" fill="#4a4a4a" text-anchor="end">60</text>
<line x1="192.30" y1="145.90" x2="312.00" y2="145.90" stroke="#d9d9d9" stroke-width="0.45"/>
<text x="188.60" y="147.00" font-size="3.5" fill="#4a4a4a" text-anchor="end">70</text>
<line x1="192.30" y1="140.10" x2="312.00" y2="140.10" stroke="#d9d9d9" stroke-width="0.45"/>
<text x="188.60" y="141.20" font-size="3.5" fill="#4a4a4a" text-anchor="end">80</text>
<line x1="192.30" y1="134.30" x2="312.00" y2="134.30" stroke="#d9d9d9" stroke-width="0.45"/>
<text x="188.60" y="135.40" font-size="3.5" fill="#4a4a4a" text-anchor="end">90</text>
<line x1="192.30" y1="128.50" x2="312.00" y2="128.50" stroke="#d9d9d9" stroke-width="0.45"/>
<text x="188.60" y="129.60" font-size="3.5" fill="#4a4a4a" text-anchor="end">100</text>
<rect x="199.60" y="143.75" width="6.20" height="42.75" fill="#4f81bd"/>
<text x="202.70" y="193.00" font-size="3.5" fill="#4a4a4a" text-anchor="middle" textLength="8.20" lengthAdjust="spacingAndGlyphs">2014</text>
<rect x="219.40" y="145.80" width="6.20" height="40.70" fill="#4f81bd"/>
<text x="222.50" y="193.00" font-size="3.5" fill="#4a4a4a" text-anchor="middle" textLength="8.20" lengthAdjust="spacingAndGlyphs">2015</text>
<rect x="239.20" y="139.60" width="6.20" height="46.90" fill="#4f81bd"/>
<text x="242.30" y="193.00" font-size="3.5" fill="#4a4a4a" text-anchor="middle" textLength="8.20" lengthAdjust="spacingAndGlyphs">2016</text>
<rect x="259.00" y="145.80" width="6.20" height="40.70" fill="#4f81bd"/>
<text x="262.10" y="193.00" font-size="3.5" fill="#4a4a4a" text-anchor="middle" textLength="8.20" lengthAdjust="spacingAndGlyphs">2017</text>
<rect x="279.00" y="136.70" width="6.20" height="49.80" fill="#4f81bd"/>
<text x="282.10" y="193.00" font-size="3.5" fill="#4a4a4a" text-anchor="middle" textLength="8.20" lengthAdjust="spacingAndGlyphs">2018</text>
<rect x="299.00" y="137.90" width="6.20" height="48.60" fill="#4f81bd"/>
<text x="302.10" y="193.00" font-size="3.5" fill="#4a4a4a" text-anchor="middle" textLength="8.20" lengthAdjust="spacingAndGlyphs">2019</text>
<rect x="328.30" y="122.90" width="133.70" height="72.30" fill="#ffffff" stroke="#d9d9d9" stroke-width="0.5"/>
<line x1="339.20" y1="180.80" x2="456.90" y2="180.80" stroke="#d9d9d9" stroke-width="0.45"/>
<text x="335.40" y="181.90" font-size="3.5" fill="#4a4a4a" text-anchor="end">-10</text>
<line x1="339.20" y1="173.11" x2="456.90" y2="173.11" stroke="#d9d9d9" stroke-width="0.45"/>
<text x="335.40" y="174.21" font-size="3.5" fill="#4a4a4a" text-anchor="end">0</text>
<line x1="339.20" y1="165.43" x2="456.90" y2="165.43" stroke="#d9d9d9" stroke-width="0.45"/>
<text x="335.40" y="166.53" font-size="3.5" fill="#4a4a4a" text-anchor="end">10</text>
<line x1="339.20" y1="157.74" x2="456.90" y2="157.74" stroke="#d9d9d9" stroke-width="0.45"/>
<text x="335.40" y="158.84" font-size="3.5" fill="#4a4a4a" text-anchor="end">20</text>
<line x1="339.20" y1="150.06" x2="456.90" y2="150.06" stroke="#d9d9d9" stroke-width="0.45"/>
<text x="335.40" y="151.16" font-size="3.5" fill="#4a4a4a" text-anchor="end">30</text>
<line x1="339.20" y1="142.37" x2="456.90" y2="142.37" stroke="#d9d9d9" stroke-width="0.45"/>
<text x="335.40" y="143.47" font-size="3.5" fill="#4a4a4a" text-anchor="end">40</text>
<line x1="339.20" y1="134.69" x2="456.90" y2="134.69" stroke="#d9d9d9" stroke-width="0.45"/>
<text x="335.40" y="135.79" font-size="3.5" fill="#4a4a4a" text-anchor="end">50</text>
<line x1="339.20" y1="127.00" x2="456.90" y2="127.00" stroke="#d9d9d9" stroke-width="0.45"/>
<text x="335.40" y="128.10" font-size="3.5" fill="#4a4a4a" text-anchor="end">60</text>
<text x="349.20" y="178.60" font-size="3.5" fill="#4a4a4a" text-anchor="middle" textLength="8.20" lengthAdjust="spacingAndGlyphs">2014</text>
<text x="368.86" y="178.60" font-size="3.5" fill="#4a4a4a" text-anchor="middle" textLength="8.20" lengthAdjust="spacingAndGlyphs">2015</text>
<text x="388.52" y="178.60" font-size="3.5" fill="#4a4a4a" text-anchor="middle" textLength="8.20" lengthAdjust="spacingAndGlyphs">2016</text>
<text x="408.18" y="178.60" font-size="3.5" fill="#4a4a4a" text-anchor="middle" textLength="8.20" lengthAdjust="spacingAndGlyphs">2017</text>
<text x="427.84" y="178.60" font-size="3.5" fill="#4a4a4a" text-anchor="middle" textLength="8.20" lengthAdjust="spacingAndGlyphs">2018</text>
<text x="447.50" y="178.60" font-size="3.5" fill="#4a4a4a" text-anchor="middle" textLength="8.20" lengthAdjust="spacingAndGlyphs">2019</text>
<path d="M349.20 151.34 L368.86 149.24 L388.52 149.59 L408.18 146.57 L427.84 144.93 L447.50 144.59" fill="none" stroke="#4f81bd" stroke-width="0.9" stroke-linejoin="round"/>
<path d="M349.20 166.97 L368.86 165.47 L388.52 176.90 L408.18 168.09 L427.84 174.61 L447.50 170.85" fill="none" stroke="#c0504d" stroke-width="0.9" stroke-linejoin="round"/>
<path d="M349.20 134.69 L368.86 138.53 L388.52 141.99 L408.18 145.10 L427.84 147.90 L447.50 150.42" fill="none" stroke="#9bbb59" stroke-width="0.9" stroke-linejoin="round"/>
<line x1="345.40" y1="189.00" x2="353.75" y2="189.00" stroke="#4f81bd" stroke-width="0.9"/>
<text x="354.80" y="190.20" font-size="3.5" fill="#4a4a4a" textLength="29.80" lengthAdjust="spacingAndGlyphs">Net working capital</text>
<line x1="390.00" y1="189.00" x2="398.50" y2="189.00" stroke="#c0504d" stroke-width="0.9"/>
<text x="399.60" y="190.20" font-size="3.5" fill="#4a4a4a" textLength="7.30" lengthAdjust="spacingAndGlyphs">Cash</text>
<line x1="412.50" y1="189.00" x2="420.80" y2="189.00" stroke="#9bbb59" stroke-width="0.9"/>
<text x="422.00" y="190.20" font-size="3.5" fill="#4a4a4a" textLength="24.50" lengthAdjust="spacingAndGlyphs">Long-term debt</text>
<rect x="172.90" y="266.20" width="135.90" height="85.80" fill="#ffffff" stroke="#d9d9d9" stroke-width="0.5"/>
<line x1="182.60" y1="332.00" x2="304.00" y2="332.00" stroke="#d9d9d9" stroke-width="0.45"/>
<text x="179.30" y="333.10" font-size="3.5" fill="#4a4a4a" text-anchor="end">0</text>
<line x1="182.60" y1="321.75" x2="304.00" y2="321.75" stroke="#d9d9d9" stroke-width="0.45"/>
<text x="179.30" y="322.85" font-size="3.5" fill="#4a4a4a" text-anchor="end">5</text>
<line x1="182.60" y1="311.50" x2="304.00" y2="311.50" stroke="#d9d9d9" stroke-width="0.45"/>
<text x="179.30" y="312.60" font-size="3.5" fill="#4a4a4a" text-anchor="end">10</text>
<line x1="182.60" y1="301.25" x2="304.00" y2="301.25" stroke="#d9d9d9" stroke-width="0.45"/>
<text x="179.30" y="302.35" font-size="3.5" fill="#4a4a4a" text-anchor="end">15</text>
<line x1="182.60" y1="291.00" x2="304.00" y2="291.00" stroke="#d9d9d9" stroke-width="0.45"/>
<text x="179.30" y="292.10" font-size="3.5" fill="#4a4a4a" text-anchor="end">20</text>
<line x1="182.60" y1="280.75" x2="304.00" y2="280.75" stroke="#d9d9d9" stroke-width="0.45"/>
<text x="179.30" y="281.85" font-size="3.5" fill="#4a4a4a" text-anchor="end">25</text>
<line x1="182.60" y1="270.50" x2="304.00" y2="270.50" stroke="#d9d9d9" stroke-width="0.45"/>
<text x="179.30" y="271.60" font-size="3.5" fill="#4a4a4a" text-anchor="end">30</text>
<rect x="187.00" y="304.67" width="3.30" height="27.33" fill="#4f81bd"/>
<rect x="191.50" y="291.00" width="3.30" height="41.00" fill="#c0504d"/>
<rect x="196.00" y="315.60" width="3.30" height="16.40" fill="#9bbb59"/>
<text x="193.00" y="338.20" font-size="3.5" fill="#4a4a4a" text-anchor="middle" textLength="8.20" lengthAdjust="spacingAndGlyphs">2014</text>
<rect x="207.22" y="303.30" width="3.30" height="28.70" fill="#4f81bd"/>
<rect x="211.72" y="288.95" width="3.30" height="43.05" fill="#c0504d"/>
<rect x="216.22" y="316.93" width="3.30" height="15.07" fill="#9bbb59"/>
<text x="213.22" y="338.20" font-size="3.5" fill="#4a4a4a" text-anchor="middle" textLength="8.20" lengthAdjust="spacingAndGlyphs">2015</text>
<rect x="227.44" y="301.87" width="3.30" height="30.13" fill="#4f81bd"/>
<rect x="231.94" y="286.80" width="3.30" height="45.20" fill="#c0504d"/>
<rect x="236.44" y="313.01" width="3.30" height="18.99" fill="#9bbb59"/>
<text x="233.44" y="338.20" font-size="3.5" fill="#4a4a4a" text-anchor="middle" textLength="8.20" lengthAdjust="spacingAndGlyphs">2016</text>
<rect x="247.66" y="300.36" width="3.30" height="31.64" fill="#4f81bd"/>
<rect x="252.16" y="284.54" width="3.30" height="47.46" fill="#c0504d"/>
<rect x="256.66" y="315.86" width="3.30" height="16.14" fill="#9bbb59"/>
<text x="253.66" y="338.20" font-size="3.5" fill="#4a4a4a" text-anchor="middle" textLength="8.20" lengthAdjust="spacingAndGlyphs">2017</text>
<rect x="267.88" y="298.78" width="3.30" height="33.22" fill="#4f81bd"/>
<rect x="272.38" y="282.16" width="3.30" height="49.84" fill="#c0504d"/>
<rect x="276.88" y="316.05" width="3.30" height="15.95" fill="#9bbb59"/>
<text x="273.88" y="338.20" font-size="3.5" fill="#4a4a4a" text-anchor="middle" textLength="8.20" lengthAdjust="spacingAndGlyphs">2018</text>
<rect x="288.10" y="297.12" width="3.30" height="34.88" fill="#4f81bd"/>
<rect x="292.60" y="279.67" width="3.30" height="52.33" fill="#c0504d"/>
<rect x="297.10" y="312.64" width="3.30" height="19.36" fill="#9bbb59"/>
<text x="294.10" y="338.20" font-size="3.5" fill="#4a4a4a" text-anchor="middle" textLength="8.20" lengthAdjust="spacingAndGlyphs">2019</text>
<rect x="199.20" y="344.70" width="1.50" height="1.50" fill="#4f81bd"/>
<text x="202.00" y="346.60" font-size="3.5" fill="#4a4a4a" textLength="27.40" lengthAdjust="spacingAndGlyphs">Trade receivables</text>
<rect x="234.80" y="344.70" width="1.50" height="1.50" fill="#c0504d"/>
<text x="237.60" y="346.60" font-size="3.5" fill="#4a4a4a" textLength="14.70" lengthAdjust="spacingAndGlyphs">Inventory</text>
<rect x="258.10" y="344.70" width="1.50" height="1.50" fill="#9bbb59"/>
<text x="261.00" y="346.60" font-size="3.5" fill="#4a4a4a" textLength="23.40" lengthAdjust="spacingAndGlyphs">Trade payables</text>
<rect x="759.50" y="82.50" width="8.50" height="361.50" fill="#f0f0f0"/>
<line x1="759.50" y1="82.50" x2="759.50" y2="444.00" stroke="#d0d0d0" stroke-width="0.6"/>
<rect x="760.60" y="84.20" width="6.60" height="5.00" fill="#ffffff" stroke="#c8c8c8" stroke-width="0.4"/>
<path d="M762.9 87.4 l1.0 -1.0 l1.0 1.0" fill="none" stroke="#555" stroke-width="0.45"/>
<rect x="760.60" y="89.60" width="6.60" height="349.00" fill="#ffffff" stroke="#d6d6d6" stroke-width="0.3"/>
<rect x="760.60" y="438.60" width="6.60" height="4.60" fill="#ffffff" stroke="#c8c8c8" stroke-width="0.4"/>
<path d="M762.9 440.4 l1.0 1.0 l1.0 -1.0" fill="none" stroke="#555" stroke-width="0.45"/>
</svg></div>
<div class="sec" id="tabs" style="top:444px;height:11px">
<svg width="768" height="11" viewBox="0 444 768 11">
<rect x="0" y="444.0" width="768" height="10.70" fill="#e6e6e6"/>
<line x1="0.00" y1="444.30" x2="768.00" y2="444.30" stroke="#c8c8c8" stroke-width="0.6"/>
<path d="M12.6 447.6 l-1 1 l1 1" fill="none" stroke="#aaa" stroke-width="0.45"/>
<path d="M22.6 447.6 l1 1 l-1 1" fill="none" stroke="#aaa" stroke-width="0.45"/>
<line x1="40.80" y1="444.80" x2="40.80" y2="453.00" stroke="#b4b4b4" stroke-width="0.5"/>
<line x1="65.30" y1="444.80" x2="65.30" y2="453.00" stroke="#b4b4b4" stroke-width="0.5"/>
<line x1="110.30" y1="444.80" x2="110.30" y2="453.00" stroke="#b4b4b4" stroke-width="0.5"/>
<text x="45.80" y="450.80" font-size="4.9" fill="#606060" textLength="13.70" lengthAdjust="spacingAndGlyphs">Inputs</text>
<text x="70.00" y="450.80" font-size="4.9" fill="#606060" textLength="4.20" lengthAdjust="spacingAndGlyphs">IS</text>
<rect x="79.20" y="444.00" width="15.80" height="9.50" fill="#ffffff"/>
<line x1="79.20" y1="453.10" x2="95.00" y2="453.10" stroke="#217346" stroke-width="0.9"/>
<text x="84.20" y="450.80" font-size="4.9" fill="#217346" font-weight="bold" textLength="5.80" lengthAdjust="spacingAndGlyphs">BS</text>
<text x="99.70" y="450.80" font-size="4.9" fill="#606060" textLength="5.60" lengthAdjust="spacingAndGlyphs">CF</text>
<circle cx="125.80" cy="448.80" r="2.80" fill="none" stroke="#666" stroke-width="0.5"/>
<line x1="124.30" y1="448.80" x2="127.30" y2="448.80" stroke="#555" stroke-width="0.6"/>
<line x1="125.80" y1="447.30" x2="125.80" y2="450.30" stroke="#555" stroke-width="0.6"/>
<circle cx="673.00" cy="446.20" r="0.30" fill="#9a9a9a"/>
<circle cx="673.00" cy="448.00" r="0.30" fill="#9a9a9a"/>
<circle cx="673.00" cy="449.80" r="0.30" fill="#9a9a9a"/>
<rect x="679.70" y="447.00" width="5.60" height="5.00" fill="#ffffff" stroke="#c8c8c8" stroke-width="0.35"/>
<path d="M683.0 448.5 l-1 1 l1 1" fill="none" stroke="#555" stroke-width="0.45"/>
<rect x="687.20" y="447.00" width="66.30" height="5.00" fill="#ffffff" stroke="#c8c8c8" stroke-width="0.35"/>
<rect x="753.50" y="447.00" width="6.20" height="5.00" fill="#ffffff" stroke="#c8c8c8" stroke-width="0.35"/>
<path d="M756.1 448.5 l1 1 l-1 1" fill="none" stroke="#555" stroke-width="0.45"/>
</svg></div>
<div class="sec" id="status" style="top:454px;height:10px">
<svg width="768" height="10" viewBox="0 454 768 10">
<rect x="0" y="454.7" width="768" height="9.30" fill="#f3f2f1"/>
<text x="3.00" y="461.90" font-size="4.8" fill="#444" textLength="12.30" lengthAdjust="spacingAndGlyphs">Ready</text>
<rect x="651.00" y="454.70" width="15.00" height="9.30" fill="#d6d6d6"/>
<rect x="655.40" y="457.20" width="5.40" height="4.60" fill="none" stroke="#555" stroke-width="0.45"/>
<line x1="658.10" y1="457.20" x2="658.10" y2="461.80" stroke="#555" stroke-width="0.4"/>
<line x1="655.40" y1="459.50" x2="660.80" y2="459.50" stroke="#555" stroke-width="0.4"/>
<rect x="671.60" y="457.20" width="5.40" height="4.60" fill="none" stroke="#666" stroke-width="0.45"/>
<rect x="672.60" y="458.20" width="3.40" height="2.60" fill="#999"/>
<rect x="687.60" y="457.20" width="5.40" height="4.60" fill="none" stroke="#666" stroke-width="0.45"/>
<line x1="687.60" y1="459.00" x2="690.80" y2="459.00" stroke="#666" stroke-width="0.4"/>
<line x1="701.40" y1="459.40" x2="703.20" y2="459.40" stroke="#555" stroke-width="0.45"/>
<line x1="706.00" y1="459.40" x2="746.00" y2="459.40" stroke="#999" stroke-width="0.45"/>
<rect x="721.10" y="457.40" width="1.30" height="4.00" fill="#555"/>
<line x1="748.10" y1="459.40" x2="749.90" y2="459.40" stroke="#555" stroke-width="0.45"/>
<line x1="749.00" y1="458.50" x2="749.00" y2="460.30" stroke="#555" stroke-width="0.45"/>
<text x="756.00" y="461.50" font-size="4.2" fill="#444" textLength="8.60" lengthAdjust="spacingAndGlyphs">80%</text>
</svg></div>
</body></html>
